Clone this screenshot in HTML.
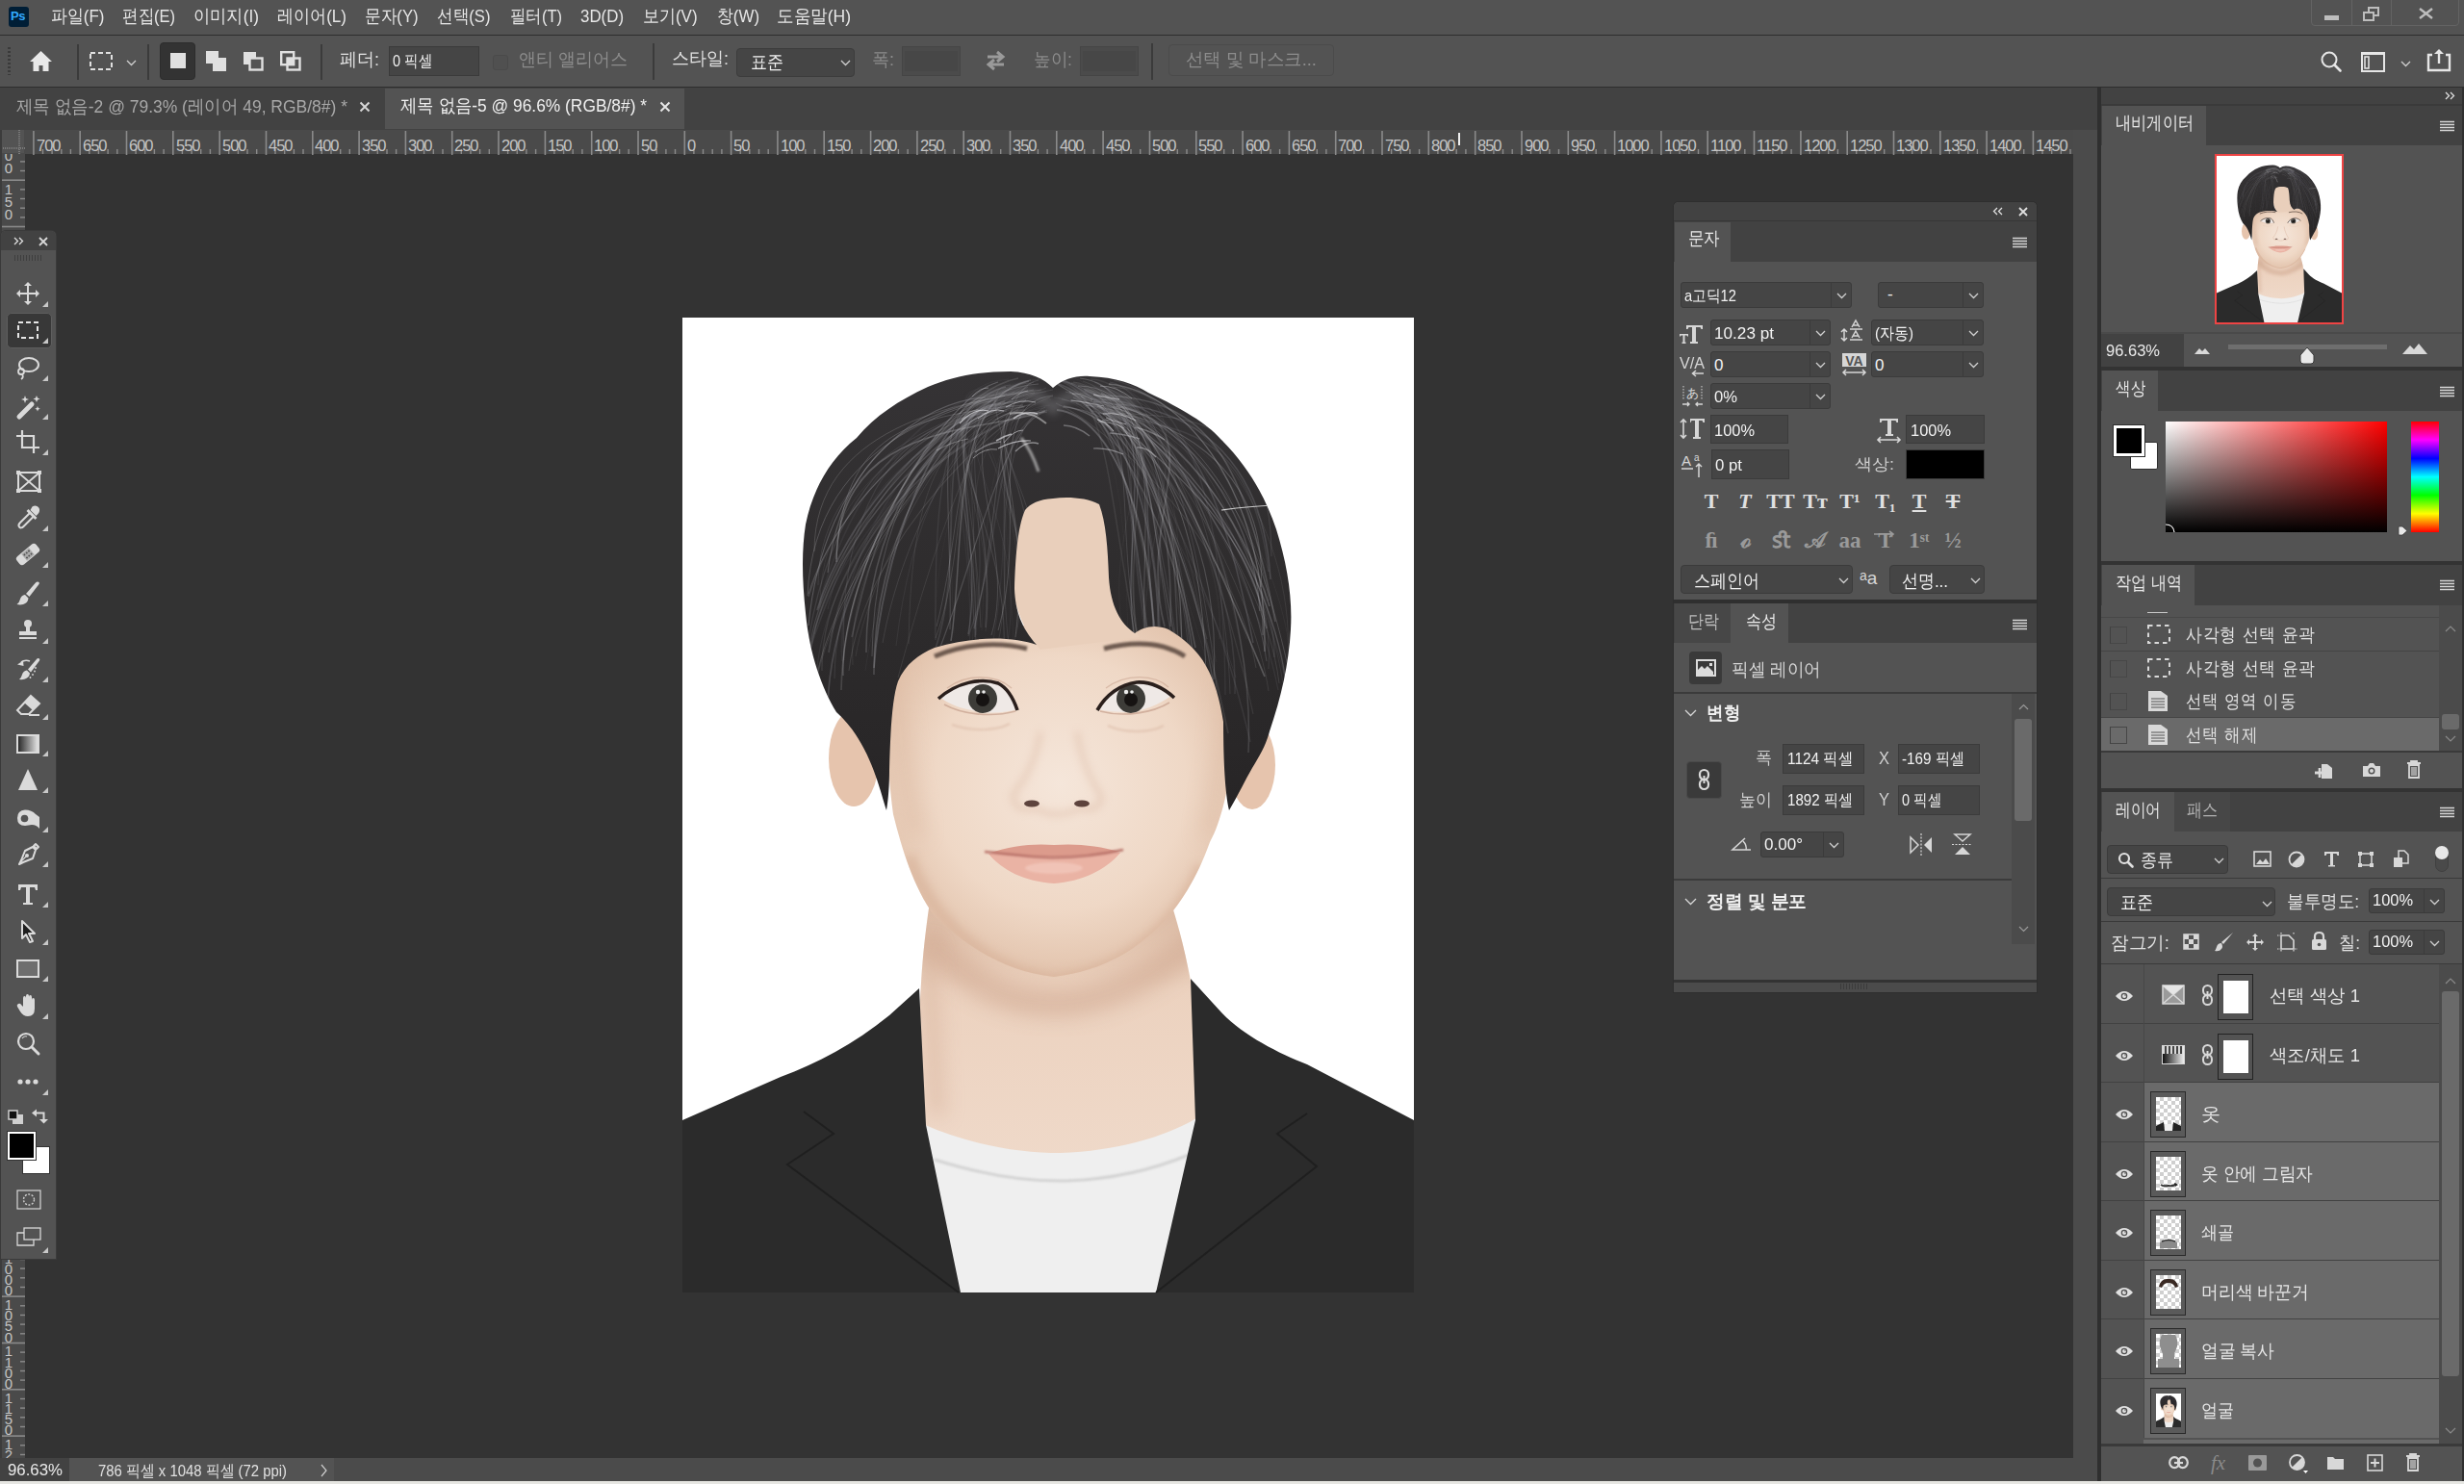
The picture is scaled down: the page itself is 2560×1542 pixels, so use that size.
<!DOCTYPE html><html><head><meta charset="utf-8"><style>
*{margin:0;padding:0;box-sizing:border-box}
html,body{width:2560px;height:1542px;overflow:hidden;background:#333333;font-family:"Liberation Sans",sans-serif;color:#e0e0e0}
.a{position:absolute}
.t{position:absolute;white-space:nowrap;line-height:1;transform-origin:0 50%}
svg{position:absolute;overflow:visible}
</style></head><body><div class="a" style="left:0px;top:0px;width:2560px;height:36px;background:#535353;"></div><div class="a" style="left:0px;top:36px;width:2560px;height:1px;background:#2e2e2e;"></div><div class="a" style="left:9px;top:7px;width:21px;height:21px;background:#001e36;border-radius:3px"></div><div class="t" style="left:11px;top:10px;font-size:13px;color:#31a8ff;font-weight:bold;letter-spacing:-0.5px">Ps</div><div class="t" style="left:53px;top:7px;font-size:19px;color:#e6e6e6;;transform:scaleX(0.8913)">파일(F)</div><div class="t" style="left:127px;top:7px;font-size:19px;color:#e6e6e6;;transform:scaleX(0.8685)">편집(E)</div><div class="t" style="left:201px;top:7px;font-size:19px;color:#e6e6e6;;transform:scaleX(0.9074)">이미지(I)</div><div class="t" style="left:288px;top:7px;font-size:19px;color:#e6e6e6;;transform:scaleX(0.8974)">레이어(L)</div><div class="t" style="left:379px;top:7px;font-size:19px;color:#e6e6e6;;transform:scaleX(0.8780)">문자(Y)</div><div class="t" style="left:454px;top:7px;font-size:19px;color:#e6e6e6;;transform:scaleX(0.8764)">선택(S)</div><div class="t" style="left:530px;top:7px;font-size:19px;color:#e6e6e6;;transform:scaleX(0.8673)">필터(T)</div><div class="t" style="left:603px;top:7px;font-size:19px;color:#e6e6e6;;transform:scaleX(0.8881)">3D(D)</div><div class="t" style="left:668px;top:7px;font-size:19px;color:#e6e6e6;;transform:scaleX(0.8938)">보기(V)</div><div class="t" style="left:745px;top:7px;font-size:19px;color:#e6e6e6;;transform:scaleX(0.8872)">창(W)</div><div class="t" style="left:807px;top:7px;font-size:19px;color:#e6e6e6;;transform:scaleX(0.9234)">도움말(H)</div><div class="a" style="left:2401px;top:-4px;width:154px;height:31px;border:1px solid #636363;border-radius:4px"></div><div class="a" style="left:2443px;top:0px;width:1px;height:27px;background:#636363;"></div><div class="a" style="left:2484px;top:0px;width:1px;height:27px;background:#636363;"></div><div class="a" style="left:2415px;top:16px;width:15px;height:5px;background:#bdbdbd;"></div><svg style="left:2455px;top:7px" width="18" height="15" viewBox="0 0 18 15"><rect x="6" y="1" width="10" height="8" fill="none" stroke="#bdbdbd" stroke-width="2"/><rect x="1" y="6" width="10" height="8" fill="#535353" stroke="#bdbdbd" stroke-width="2"/></svg><svg style="left:2513px;top:8px" width="15" height="12" viewBox="0 0 15 12"><path d="M1 1L14 11M14 1L1 11" stroke="#bdbdbd" stroke-width="2.4"/></svg><div class="a" style="left:0px;top:37px;width:2560px;height:53px;background:#535353;"></div><div class="a" style="left:0px;top:90px;width:2560px;height:1px;background:#2e2e2e;"></div><div class="a" style="left:8px;top:49px;width:3px;height:29px;background:repeating-linear-gradient(#3a3a3a 0 2px,transparent 2px 4px)"></div><svg style="left:30px;top:52px" width="25" height="23" viewBox="0 0 25 23"><path d="M12.5 1L1 12h3.5v10h6v-6h4v6h6V12H24z" fill="#e8e8e8"/></svg><div class="a" style="left:80px;top:46px;width:2px;height:37px;background:#3b3b3b;"></div><svg style="left:93px;top:54px" width="24" height="19" viewBox="0 0 24 19"><rect x="1" y="1" width="22" height="17" fill="none" stroke="#e0e0e0" stroke-width="2" stroke-dasharray="5 3"/></svg><svg style="left:131px;top:62px" width="11" height="7" viewBox="0 0 11 7"><path d="M1 1l4.5 4.5L10 1" fill="none" stroke="#cfcfcf" stroke-width="1.3"/></svg><div class="a" style="left:153px;top:46px;width:2px;height:37px;background:#3b3b3b;"></div><div class="a" style="left:166px;top:44px;width:37px;height:39px;background:#333;border-radius:4px;border:1px solid #2c2c2c"></div><div class="a" style="left:177px;top:55px;width:16px;height:16px;background:#e0e0e0;"></div><svg style="left:213px;top:52px" width="23" height="23" viewBox="0 0 23 23"><rect x="1" y="1" width="13" height="13" fill="#e0e0e0"/><rect x="8" y="8" width="14" height="14" fill="#e0e0e0"/></svg><svg style="left:252px;top:53px" width="22" height="21" viewBox="0 0 22 21"><rect x="1" y="1" width="13" height="13" fill="#e0e0e0"/><rect x="7.5" y="7.5" width="13" height="12" fill="#535353" stroke="#e0e0e0" stroke-width="2.4"/></svg><svg style="left:291px;top:53px" width="22" height="21" viewBox="0 0 22 21"><rect x="1.2" y="1.2" width="13" height="13" fill="none" stroke="#e0e0e0" stroke-width="2.4"/><rect x="7.5" y="7.5" width="13" height="12" fill="none" stroke="#e0e0e0" stroke-width="2.4"/><rect x="7.5" y="7.5" width="7" height="7" fill="#e0e0e0"/></svg><div class="a" style="left:333px;top:46px;width:2px;height:37px;background:#3b3b3b;"></div><div class="t" style="left:353px;top:52px;font-size:19px;color:#e0e0e0;;transform:scaleX(0.9473)">페더:</div><div class="a" style="left:404px;top:48px;width:94px;height:31px;background:#454545;border:1px solid #3a3a3a"></div><div class="t" style="left:408px;top:55px;font-size:17px;color:#f2f2f2;;transform:scaleX(0.8508)">0 픽셀</div><div class="a" style="left:512px;top:57px;width:16px;height:16px;border:1px solid #4a4a4a;border-radius:3px;background:#505050"></div><div class="t" style="left:539px;top:52px;font-size:19px;color:#8c8c8c;;transform:scaleX(0.9473)">앤티 앨리어스</div><div class="a" style="left:678px;top:45px;width:2px;height:38px;background:#3b3b3b;"></div><div class="t" style="left:698px;top:51px;font-size:19px;color:#e0e0e0;;transform:scaleX(0.9473)">스타일:</div><div class="a" style="left:765px;top:50px;width:123px;height:30px;background:#454545;border:1px solid #3c3c3c;border-radius:4px"></div><div class="t" style="left:780px;top:55px;font-size:19px;color:#f0f0f0;;transform:scaleX(0.8947)">표준</div><svg style="left:873px;top:62px" width="11" height="7" viewBox="0 0 11 7"><path d="M1 1l4.5 4.5L10 1" fill="none" stroke="#cfcfcf" stroke-width="1.3"/></svg><div class="t" style="left:906px;top:52px;font-size:19px;color:#8c8c8c;;transform:scaleX(0.9472)">폭:</div><div class="a" style="left:937px;top:48px;width:61px;height:31px;background:#4b4b4b;border:1px solid #454545"><div class="a" style="left:2px;top:4px;width:55px;height:21px;background:#474747"></div></div><svg style="left:1024px;top:53px" width="21" height="20" viewBox="0 0 21 20"><path d="M2 6h15M12 1l6 5-6 5" fill="none" stroke="#9a9a9a" stroke-width="3"/><path d="M19 14H4M9 9l-6 5 6 5" fill="none" stroke="#9a9a9a" stroke-width="3"/></svg><div class="t" style="left:1074px;top:52px;font-size:19px;color:#8c8c8c;;transform:scaleX(0.9242)">높이:</div><div class="a" style="left:1122px;top:48px;width:61px;height:31px;background:#4b4b4b;border:1px solid #454545"><div class="a" style="left:2px;top:4px;width:55px;height:21px;background:#474747"></div></div><div class="a" style="left:1196px;top:45px;width:2px;height:38px;background:#3b3b3b;"></div><div class="a" style="left:1214px;top:46px;width:172px;height:33px;border:1px solid #4b4b4b;border-radius:4px;background:#535353"></div><div class="t" style="left:1232px;top:52px;font-size:19px;color:#8c8c8c;;transform:scaleX(0.9686)">선택 및 마스크...</div><svg style="left:2411px;top:53px" width="22" height="22" viewBox="0 0 22 22"><circle cx="9" cy="9" r="7.5" fill="none" stroke="#e6e6e6" stroke-width="2"/><path d="M14.5 14.5l6 6" stroke="#e6e6e6" stroke-width="2.6" stroke-linecap="round"/></svg><svg style="left:2453px;top:54px" width="25" height="21" viewBox="0 0 25 21"><rect x="1" y="1" width="23" height="19" fill="none" stroke="#e6e6e6" stroke-width="2"/><rect x="1" y="1" width="23" height="2" fill="#e6e6e6"/><rect x="4" y="5" width="4" height="12" fill="none" stroke="#e6e6e6" stroke-width="1.5"/></svg><svg style="left:2494px;top:63px" width="11" height="7" viewBox="0 0 11 7"><path d="M1 1l4.5 4.5L10 1" fill="none" stroke="#cfcfcf" stroke-width="1.3"/></svg><svg style="left:2521px;top:50px" width="26" height="25" viewBox="0 0 26 25"><path d="M6 7H2v16h22V7h-4" fill="none" stroke="#e6e6e6" stroke-width="2.4"/><path d="M13 16V4" stroke="#e6e6e6" stroke-width="2.4"/><path d="M8 6l5-5 5 5z" fill="#e6e6e6"/></svg><div class="a" style="left:0px;top:91px;width:2179px;height:44px;background:#424242;"></div><div class="t" style="left:17px;top:101px;font-size:19px;color:#a8a8a8;;transform:scaleX(0.9196)">제목 없음-2 @ 79.3% (레이어 49, RGB/8#) *</div><svg style="left:373px;top:105px" width="12" height="12" viewBox="0 0 12 12"><path d="M1.5 1.5l9 9M10.5 1.5l-9 9" stroke="#d6d6d6" stroke-width="2"/></svg><div class="a" style="left:400px;top:92px;width:311px;height:42px;background:#535353;"></div><div class="t" style="left:416px;top:100px;font-size:19px;color:#f0f0f0;;transform:scaleX(0.9140)">제목 없음-5 @ 96.6% (RGB/8#) *</div><svg style="left:685px;top:105px" width="12" height="12" viewBox="0 0 12 12"><path d="M1.5 1.5l9 9M10.5 1.5l-9 9" stroke="#e6e6e6" stroke-width="2"/></svg><div class="a" style="left:0px;top:135px;width:2154px;height:25px;background:#4a4a4a;"></div><div class="a" style="left:0px;top:160px;width:26px;height:1355px;background:#4a4a4a;"></div><div class="a" style="left:1px;top:135px;width:24px;height:24px;background:#535353;"></div><div class="a" style="left:1px;top:153px;width:25px;height:2px;background:repeating-linear-gradient(90deg,#7a7a7a 0 1px,transparent 1px 2px)"></div><div class="a" style="left:19px;top:135px;width:2px;height:25px;background:repeating-linear-gradient(#7a7a7a 0 1px,transparent 1px 2px)"></div><svg style="left:0;top:135px" width="2154" height="26"><rect x="34.1" y="1" width="1.6" height="25" fill="#8a8a8a"/><rect x="43.8" y="20" width="1.4" height="5" fill="#8a8a8a"/><rect x="53.4" y="20" width="1.4" height="5" fill="#8a8a8a"/><rect x="63.1" y="20" width="1.4" height="5" fill="#8a8a8a"/><rect x="72.7" y="20" width="1.4" height="5" fill="#8a8a8a"/><rect x="82.4" y="1" width="1.6" height="25" fill="#8a8a8a"/><rect x="92.1" y="20" width="1.4" height="5" fill="#8a8a8a"/><rect x="101.7" y="20" width="1.4" height="5" fill="#8a8a8a"/><rect x="111.4" y="20" width="1.4" height="5" fill="#8a8a8a"/><rect x="121.1" y="20" width="1.4" height="5" fill="#8a8a8a"/><rect x="130.7" y="1" width="1.6" height="25" fill="#8a8a8a"/><rect x="140.4" y="20" width="1.4" height="5" fill="#8a8a8a"/><rect x="150.0" y="20" width="1.4" height="5" fill="#8a8a8a"/><rect x="159.7" y="20" width="1.4" height="5" fill="#8a8a8a"/><rect x="169.4" y="20" width="1.4" height="5" fill="#8a8a8a"/><rect x="179.0" y="1" width="1.6" height="25" fill="#8a8a8a"/><rect x="188.7" y="20" width="1.4" height="5" fill="#8a8a8a"/><rect x="198.4" y="20" width="1.4" height="5" fill="#8a8a8a"/><rect x="208.0" y="20" width="1.4" height="5" fill="#8a8a8a"/><rect x="217.7" y="20" width="1.4" height="5" fill="#8a8a8a"/><rect x="227.4" y="1" width="1.6" height="25" fill="#8a8a8a"/><rect x="237.0" y="20" width="1.4" height="5" fill="#8a8a8a"/><rect x="246.7" y="20" width="1.4" height="5" fill="#8a8a8a"/><rect x="256.3" y="20" width="1.4" height="5" fill="#8a8a8a"/><rect x="266.0" y="20" width="1.4" height="5" fill="#8a8a8a"/><rect x="275.7" y="1" width="1.6" height="25" fill="#8a8a8a"/><rect x="285.3" y="20" width="1.4" height="5" fill="#8a8a8a"/><rect x="295.0" y="20" width="1.4" height="5" fill="#8a8a8a"/><rect x="304.7" y="20" width="1.4" height="5" fill="#8a8a8a"/><rect x="314.3" y="20" width="1.4" height="5" fill="#8a8a8a"/><rect x="324.0" y="1" width="1.6" height="25" fill="#8a8a8a"/><rect x="333.6" y="20" width="1.4" height="5" fill="#8a8a8a"/><rect x="343.3" y="20" width="1.4" height="5" fill="#8a8a8a"/><rect x="353.0" y="20" width="1.4" height="5" fill="#8a8a8a"/><rect x="362.6" y="20" width="1.4" height="5" fill="#8a8a8a"/><rect x="372.3" y="1" width="1.6" height="25" fill="#8a8a8a"/><rect x="382.0" y="20" width="1.4" height="5" fill="#8a8a8a"/><rect x="391.6" y="20" width="1.4" height="5" fill="#8a8a8a"/><rect x="401.3" y="20" width="1.4" height="5" fill="#8a8a8a"/><rect x="410.9" y="20" width="1.4" height="5" fill="#8a8a8a"/><rect x="420.6" y="1" width="1.6" height="25" fill="#8a8a8a"/><rect x="430.3" y="20" width="1.4" height="5" fill="#8a8a8a"/><rect x="439.9" y="20" width="1.4" height="5" fill="#8a8a8a"/><rect x="449.6" y="20" width="1.4" height="5" fill="#8a8a8a"/><rect x="459.3" y="20" width="1.4" height="5" fill="#8a8a8a"/><rect x="468.9" y="1" width="1.6" height="25" fill="#8a8a8a"/><rect x="478.6" y="20" width="1.4" height="5" fill="#8a8a8a"/><rect x="488.3" y="20" width="1.4" height="5" fill="#8a8a8a"/><rect x="497.9" y="20" width="1.4" height="5" fill="#8a8a8a"/><rect x="507.6" y="20" width="1.4" height="5" fill="#8a8a8a"/><rect x="517.2" y="1" width="1.6" height="25" fill="#8a8a8a"/><rect x="526.9" y="20" width="1.4" height="5" fill="#8a8a8a"/><rect x="536.6" y="20" width="1.4" height="5" fill="#8a8a8a"/><rect x="546.2" y="20" width="1.4" height="5" fill="#8a8a8a"/><rect x="555.9" y="20" width="1.4" height="5" fill="#8a8a8a"/><rect x="565.6" y="1" width="1.6" height="25" fill="#8a8a8a"/><rect x="575.2" y="20" width="1.4" height="5" fill="#8a8a8a"/><rect x="584.9" y="20" width="1.4" height="5" fill="#8a8a8a"/><rect x="594.5" y="20" width="1.4" height="5" fill="#8a8a8a"/><rect x="604.2" y="20" width="1.4" height="5" fill="#8a8a8a"/><rect x="613.9" y="1" width="1.6" height="25" fill="#8a8a8a"/><rect x="623.5" y="20" width="1.4" height="5" fill="#8a8a8a"/><rect x="633.2" y="20" width="1.4" height="5" fill="#8a8a8a"/><rect x="642.9" y="20" width="1.4" height="5" fill="#8a8a8a"/><rect x="652.5" y="20" width="1.4" height="5" fill="#8a8a8a"/><rect x="662.2" y="1" width="1.6" height="25" fill="#8a8a8a"/><rect x="671.8" y="20" width="1.4" height="5" fill="#8a8a8a"/><rect x="681.5" y="20" width="1.4" height="5" fill="#8a8a8a"/><rect x="691.2" y="20" width="1.4" height="5" fill="#8a8a8a"/><rect x="700.8" y="20" width="1.4" height="5" fill="#8a8a8a"/><rect x="710.5" y="1" width="1.6" height="25" fill="#8a8a8a"/><rect x="720.2" y="20" width="1.4" height="5" fill="#8a8a8a"/><rect x="729.8" y="20" width="1.4" height="5" fill="#8a8a8a"/><rect x="739.5" y="20" width="1.4" height="5" fill="#8a8a8a"/><rect x="749.2" y="20" width="1.4" height="5" fill="#8a8a8a"/><rect x="758.8" y="1" width="1.6" height="25" fill="#8a8a8a"/><rect x="768.5" y="20" width="1.4" height="5" fill="#8a8a8a"/><rect x="778.1" y="20" width="1.4" height="5" fill="#8a8a8a"/><rect x="787.8" y="20" width="1.4" height="5" fill="#8a8a8a"/><rect x="797.5" y="20" width="1.4" height="5" fill="#8a8a8a"/><rect x="807.1" y="1" width="1.6" height="25" fill="#8a8a8a"/><rect x="816.8" y="20" width="1.4" height="5" fill="#8a8a8a"/><rect x="826.5" y="20" width="1.4" height="5" fill="#8a8a8a"/><rect x="836.1" y="20" width="1.4" height="5" fill="#8a8a8a"/><rect x="845.8" y="20" width="1.4" height="5" fill="#8a8a8a"/><rect x="855.4" y="1" width="1.6" height="25" fill="#8a8a8a"/><rect x="865.1" y="20" width="1.4" height="5" fill="#8a8a8a"/><rect x="874.8" y="20" width="1.4" height="5" fill="#8a8a8a"/><rect x="884.4" y="20" width="1.4" height="5" fill="#8a8a8a"/><rect x="894.1" y="20" width="1.4" height="5" fill="#8a8a8a"/><rect x="903.8" y="1" width="1.6" height="25" fill="#8a8a8a"/><rect x="913.4" y="20" width="1.4" height="5" fill="#8a8a8a"/><rect x="923.1" y="20" width="1.4" height="5" fill="#8a8a8a"/><rect x="932.7" y="20" width="1.4" height="5" fill="#8a8a8a"/><rect x="942.4" y="20" width="1.4" height="5" fill="#8a8a8a"/><rect x="952.1" y="1" width="1.6" height="25" fill="#8a8a8a"/><rect x="961.7" y="20" width="1.4" height="5" fill="#8a8a8a"/><rect x="971.4" y="20" width="1.4" height="5" fill="#8a8a8a"/><rect x="981.1" y="20" width="1.4" height="5" fill="#8a8a8a"/><rect x="990.7" y="20" width="1.4" height="5" fill="#8a8a8a"/><rect x="1000.4" y="1" width="1.6" height="25" fill="#8a8a8a"/><rect x="1010.1" y="20" width="1.4" height="5" fill="#8a8a8a"/><rect x="1019.7" y="20" width="1.4" height="5" fill="#8a8a8a"/><rect x="1029.4" y="20" width="1.4" height="5" fill="#8a8a8a"/><rect x="1039.0" y="20" width="1.4" height="5" fill="#8a8a8a"/><rect x="1048.7" y="1" width="1.6" height="25" fill="#8a8a8a"/><rect x="1058.4" y="20" width="1.4" height="5" fill="#8a8a8a"/><rect x="1068.0" y="20" width="1.4" height="5" fill="#8a8a8a"/><rect x="1077.7" y="20" width="1.4" height="5" fill="#8a8a8a"/><rect x="1087.4" y="20" width="1.4" height="5" fill="#8a8a8a"/><rect x="1097.0" y="1" width="1.6" height="25" fill="#8a8a8a"/><rect x="1106.7" y="20" width="1.4" height="5" fill="#8a8a8a"/><rect x="1116.3" y="20" width="1.4" height="5" fill="#8a8a8a"/><rect x="1126.0" y="20" width="1.4" height="5" fill="#8a8a8a"/><rect x="1135.7" y="20" width="1.4" height="5" fill="#8a8a8a"/><rect x="1145.3" y="1" width="1.6" height="25" fill="#8a8a8a"/><rect x="1155.0" y="20" width="1.4" height="5" fill="#8a8a8a"/><rect x="1164.7" y="20" width="1.4" height="5" fill="#8a8a8a"/><rect x="1174.3" y="20" width="1.4" height="5" fill="#8a8a8a"/><rect x="1184.0" y="20" width="1.4" height="5" fill="#8a8a8a"/><rect x="1193.7" y="1" width="1.6" height="25" fill="#8a8a8a"/><rect x="1203.3" y="20" width="1.4" height="5" fill="#8a8a8a"/><rect x="1213.0" y="20" width="1.4" height="5" fill="#8a8a8a"/><rect x="1222.6" y="20" width="1.4" height="5" fill="#8a8a8a"/><rect x="1232.3" y="20" width="1.4" height="5" fill="#8a8a8a"/><rect x="1242.0" y="1" width="1.6" height="25" fill="#8a8a8a"/><rect x="1251.6" y="20" width="1.4" height="5" fill="#8a8a8a"/><rect x="1261.3" y="20" width="1.4" height="5" fill="#8a8a8a"/><rect x="1271.0" y="20" width="1.4" height="5" fill="#8a8a8a"/><rect x="1280.6" y="20" width="1.4" height="5" fill="#8a8a8a"/><rect x="1290.3" y="1" width="1.6" height="25" fill="#8a8a8a"/><rect x="1299.9" y="20" width="1.4" height="5" fill="#8a8a8a"/><rect x="1309.6" y="20" width="1.4" height="5" fill="#8a8a8a"/><rect x="1319.3" y="20" width="1.4" height="5" fill="#8a8a8a"/><rect x="1328.9" y="20" width="1.4" height="5" fill="#8a8a8a"/><rect x="1338.6" y="1" width="1.6" height="25" fill="#8a8a8a"/><rect x="1348.3" y="20" width="1.4" height="5" fill="#8a8a8a"/><rect x="1357.9" y="20" width="1.4" height="5" fill="#8a8a8a"/><rect x="1367.6" y="20" width="1.4" height="5" fill="#8a8a8a"/><rect x="1377.2" y="20" width="1.4" height="5" fill="#8a8a8a"/><rect x="1386.9" y="1" width="1.6" height="25" fill="#8a8a8a"/><rect x="1396.6" y="20" width="1.4" height="5" fill="#8a8a8a"/><rect x="1406.2" y="20" width="1.4" height="5" fill="#8a8a8a"/><rect x="1415.9" y="20" width="1.4" height="5" fill="#8a8a8a"/><rect x="1425.6" y="20" width="1.4" height="5" fill="#8a8a8a"/><rect x="1435.2" y="1" width="1.6" height="25" fill="#8a8a8a"/><rect x="1444.9" y="20" width="1.4" height="5" fill="#8a8a8a"/><rect x="1454.6" y="20" width="1.4" height="5" fill="#8a8a8a"/><rect x="1464.2" y="20" width="1.4" height="5" fill="#8a8a8a"/><rect x="1473.9" y="20" width="1.4" height="5" fill="#8a8a8a"/><rect x="1483.5" y="1" width="1.6" height="25" fill="#8a8a8a"/><rect x="1493.2" y="20" width="1.4" height="5" fill="#8a8a8a"/><rect x="1502.9" y="20" width="1.4" height="5" fill="#8a8a8a"/><rect x="1512.5" y="20" width="1.4" height="5" fill="#8a8a8a"/><rect x="1522.2" y="20" width="1.4" height="5" fill="#8a8a8a"/><rect x="1531.9" y="1" width="1.6" height="25" fill="#8a8a8a"/><rect x="1541.5" y="20" width="1.4" height="5" fill="#8a8a8a"/><rect x="1551.2" y="20" width="1.4" height="5" fill="#8a8a8a"/><rect x="1560.8" y="20" width="1.4" height="5" fill="#8a8a8a"/><rect x="1570.5" y="20" width="1.4" height="5" fill="#8a8a8a"/><rect x="1580.2" y="1" width="1.6" height="25" fill="#8a8a8a"/><rect x="1589.8" y="20" width="1.4" height="5" fill="#8a8a8a"/><rect x="1599.5" y="20" width="1.4" height="5" fill="#8a8a8a"/><rect x="1609.2" y="20" width="1.4" height="5" fill="#8a8a8a"/><rect x="1618.8" y="20" width="1.4" height="5" fill="#8a8a8a"/><rect x="1628.5" y="1" width="1.6" height="25" fill="#8a8a8a"/><rect x="1638.1" y="20" width="1.4" height="5" fill="#8a8a8a"/><rect x="1647.8" y="20" width="1.4" height="5" fill="#8a8a8a"/><rect x="1657.5" y="20" width="1.4" height="5" fill="#8a8a8a"/><rect x="1667.1" y="20" width="1.4" height="5" fill="#8a8a8a"/><rect x="1676.8" y="1" width="1.6" height="25" fill="#8a8a8a"/><rect x="1686.5" y="20" width="1.4" height="5" fill="#8a8a8a"/><rect x="1696.1" y="20" width="1.4" height="5" fill="#8a8a8a"/><rect x="1705.8" y="20" width="1.4" height="5" fill="#8a8a8a"/><rect x="1715.5" y="20" width="1.4" height="5" fill="#8a8a8a"/><rect x="1725.1" y="1" width="1.6" height="25" fill="#8a8a8a"/><rect x="1734.8" y="20" width="1.4" height="5" fill="#8a8a8a"/><rect x="1744.4" y="20" width="1.4" height="5" fill="#8a8a8a"/><rect x="1754.1" y="20" width="1.4" height="5" fill="#8a8a8a"/><rect x="1763.8" y="20" width="1.4" height="5" fill="#8a8a8a"/><rect x="1773.4" y="1" width="1.6" height="25" fill="#8a8a8a"/><rect x="1783.1" y="20" width="1.4" height="5" fill="#8a8a8a"/><rect x="1792.8" y="20" width="1.4" height="5" fill="#8a8a8a"/><rect x="1802.4" y="20" width="1.4" height="5" fill="#8a8a8a"/><rect x="1812.1" y="20" width="1.4" height="5" fill="#8a8a8a"/><rect x="1821.7" y="1" width="1.6" height="25" fill="#8a8a8a"/><rect x="1831.4" y="20" width="1.4" height="5" fill="#8a8a8a"/><rect x="1841.1" y="20" width="1.4" height="5" fill="#8a8a8a"/><rect x="1850.7" y="20" width="1.4" height="5" fill="#8a8a8a"/><rect x="1860.4" y="20" width="1.4" height="5" fill="#8a8a8a"/><rect x="1870.1" y="1" width="1.6" height="25" fill="#8a8a8a"/><rect x="1879.7" y="20" width="1.4" height="5" fill="#8a8a8a"/><rect x="1889.4" y="20" width="1.4" height="5" fill="#8a8a8a"/><rect x="1899.0" y="20" width="1.4" height="5" fill="#8a8a8a"/><rect x="1908.7" y="20" width="1.4" height="5" fill="#8a8a8a"/><rect x="1918.4" y="1" width="1.6" height="25" fill="#8a8a8a"/><rect x="1928.0" y="20" width="1.4" height="5" fill="#8a8a8a"/><rect x="1937.7" y="20" width="1.4" height="5" fill="#8a8a8a"/><rect x="1947.4" y="20" width="1.4" height="5" fill="#8a8a8a"/><rect x="1957.0" y="20" width="1.4" height="5" fill="#8a8a8a"/><rect x="1966.7" y="1" width="1.6" height="25" fill="#8a8a8a"/><rect x="1976.4" y="20" width="1.4" height="5" fill="#8a8a8a"/><rect x="1986.0" y="20" width="1.4" height="5" fill="#8a8a8a"/><rect x="1995.7" y="20" width="1.4" height="5" fill="#8a8a8a"/><rect x="2005.3" y="20" width="1.4" height="5" fill="#8a8a8a"/><rect x="2015.0" y="1" width="1.6" height="25" fill="#8a8a8a"/><rect x="2024.7" y="20" width="1.4" height="5" fill="#8a8a8a"/><rect x="2034.3" y="20" width="1.4" height="5" fill="#8a8a8a"/><rect x="2044.0" y="20" width="1.4" height="5" fill="#8a8a8a"/><rect x="2053.7" y="20" width="1.4" height="5" fill="#8a8a8a"/><rect x="2063.3" y="1" width="1.6" height="25" fill="#8a8a8a"/><rect x="2073.0" y="20" width="1.4" height="5" fill="#8a8a8a"/><rect x="2082.6" y="20" width="1.4" height="5" fill="#8a8a8a"/><rect x="2092.3" y="20" width="1.4" height="5" fill="#8a8a8a"/><rect x="2102.0" y="20" width="1.4" height="5" fill="#8a8a8a"/><rect x="2111.6" y="1" width="1.6" height="25" fill="#8a8a8a"/><rect x="2121.3" y="20" width="1.4" height="5" fill="#8a8a8a"/><rect x="2131.0" y="20" width="1.4" height="5" fill="#8a8a8a"/><rect x="2140.6" y="20" width="1.4" height="5" fill="#8a8a8a"/><rect x="2150.3" y="20" width="1.4" height="5" fill="#8a8a8a"/></svg><div class="t" style="left:38px;top:143px;font-size:16.5px;color:#c4c4c4;letter-spacing:-1px">700</div><div class="t" style="left:86px;top:143px;font-size:16.5px;color:#c4c4c4;letter-spacing:-1px">650</div><div class="t" style="left:134px;top:143px;font-size:16.5px;color:#c4c4c4;letter-spacing:-1px">600</div><div class="t" style="left:183px;top:143px;font-size:16.5px;color:#c4c4c4;letter-spacing:-1px">550</div><div class="t" style="left:231px;top:143px;font-size:16.5px;color:#c4c4c4;letter-spacing:-1px">500</div><div class="t" style="left:279px;top:143px;font-size:16.5px;color:#c4c4c4;letter-spacing:-1px">450</div><div class="t" style="left:327px;top:143px;font-size:16.5px;color:#c4c4c4;letter-spacing:-1px">400</div><div class="t" style="left:376px;top:143px;font-size:16.5px;color:#c4c4c4;letter-spacing:-1px">350</div><div class="t" style="left:424px;top:143px;font-size:16.5px;color:#c4c4c4;letter-spacing:-1px">300</div><div class="t" style="left:472px;top:143px;font-size:16.5px;color:#c4c4c4;letter-spacing:-1px">250</div><div class="t" style="left:521px;top:143px;font-size:16.5px;color:#c4c4c4;letter-spacing:-1px">200</div><div class="t" style="left:569px;top:143px;font-size:16.5px;color:#c4c4c4;letter-spacing:-1px">150</div><div class="t" style="left:617px;top:143px;font-size:16.5px;color:#c4c4c4;letter-spacing:-1px">100</div><div class="t" style="left:666px;top:143px;font-size:16.5px;color:#c4c4c4;letter-spacing:-1px">50</div><div class="t" style="left:714px;top:143px;font-size:16.5px;color:#c4c4c4;letter-spacing:-1px">0</div><div class="t" style="left:762px;top:143px;font-size:16.5px;color:#c4c4c4;letter-spacing:-1px">50</div><div class="t" style="left:811px;top:143px;font-size:16.5px;color:#c4c4c4;letter-spacing:-1px">100</div><div class="t" style="left:859px;top:143px;font-size:16.5px;color:#c4c4c4;letter-spacing:-1px">150</div><div class="t" style="left:907px;top:143px;font-size:16.5px;color:#c4c4c4;letter-spacing:-1px">200</div><div class="t" style="left:956px;top:143px;font-size:16.5px;color:#c4c4c4;letter-spacing:-1px">250</div><div class="t" style="left:1004px;top:143px;font-size:16.5px;color:#c4c4c4;letter-spacing:-1px">300</div><div class="t" style="left:1052px;top:143px;font-size:16.5px;color:#c4c4c4;letter-spacing:-1px">350</div><div class="t" style="left:1101px;top:143px;font-size:16.5px;color:#c4c4c4;letter-spacing:-1px">400</div><div class="t" style="left:1149px;top:143px;font-size:16.5px;color:#c4c4c4;letter-spacing:-1px">450</div><div class="t" style="left:1197px;top:143px;font-size:16.5px;color:#c4c4c4;letter-spacing:-1px">500</div><div class="t" style="left:1245px;top:143px;font-size:16.5px;color:#c4c4c4;letter-spacing:-1px">550</div><div class="t" style="left:1294px;top:143px;font-size:16.5px;color:#c4c4c4;letter-spacing:-1px">600</div><div class="t" style="left:1342px;top:143px;font-size:16.5px;color:#c4c4c4;letter-spacing:-1px">650</div><div class="t" style="left:1390px;top:143px;font-size:16.5px;color:#c4c4c4;letter-spacing:-1px">700</div><div class="t" style="left:1439px;top:143px;font-size:16.5px;color:#c4c4c4;letter-spacing:-1px">750</div><div class="t" style="left:1487px;top:143px;font-size:16.5px;color:#c4c4c4;letter-spacing:-1px">800</div><div class="t" style="left:1535px;top:143px;font-size:16.5px;color:#c4c4c4;letter-spacing:-1px">850</div><div class="t" style="left:1584px;top:143px;font-size:16.5px;color:#c4c4c4;letter-spacing:-1px">900</div><div class="t" style="left:1632px;top:143px;font-size:16.5px;color:#c4c4c4;letter-spacing:-1px">950</div><div class="t" style="left:1680px;top:143px;font-size:16.5px;color:#c4c4c4;letter-spacing:-1px">1000</div><div class="t" style="left:1729px;top:143px;font-size:16.5px;color:#c4c4c4;letter-spacing:-1px">1050</div><div class="t" style="left:1777px;top:143px;font-size:16.5px;color:#c4c4c4;letter-spacing:-1px">1100</div><div class="t" style="left:1825px;top:143px;font-size:16.5px;color:#c4c4c4;letter-spacing:-1px">1150</div><div class="t" style="left:1874px;top:143px;font-size:16.5px;color:#c4c4c4;letter-spacing:-1px">1200</div><div class="t" style="left:1922px;top:143px;font-size:16.5px;color:#c4c4c4;letter-spacing:-1px">1250</div><div class="t" style="left:1970px;top:143px;font-size:16.5px;color:#c4c4c4;letter-spacing:-1px">1300</div><div class="t" style="left:2019px;top:143px;font-size:16.5px;color:#c4c4c4;letter-spacing:-1px">1350</div><div class="t" style="left:2067px;top:143px;font-size:16.5px;color:#c4c4c4;letter-spacing:-1px">1400</div><div class="t" style="left:2115px;top:143px;font-size:16.5px;color:#c4c4c4;letter-spacing:-1px">1450</div><div class="a" style="left:0;top:160px;width:26px;height:1355px;overflow:hidden"><div class="a" style="left:0;top:-160px;width:26px;height:1515px"><div class="t" style="left:2px;top:93.4px;width:14px;font-size:15px;color:#c4c4c4;line-height:13px;white-space:normal;text-align:center">2<br>5<br>0</div><div class="t" style="left:2px;top:141.7px;width:14px;font-size:15px;color:#c4c4c4;line-height:13px;white-space:normal;text-align:center">2<br>0<br>0</div><div class="t" style="left:2px;top:190.0px;width:14px;font-size:15px;color:#c4c4c4;line-height:13px;white-space:normal;text-align:center">1<br>5<br>0</div><div class="t" style="left:2px;top:238.3px;width:14px;font-size:15px;color:#c4c4c4;line-height:13px;white-space:normal;text-align:center">1<br>0<br>0</div><div class="t" style="left:2px;top:286.7px;width:14px;font-size:15px;color:#c4c4c4;line-height:13px;white-space:normal;text-align:center">5<br>0</div><div class="t" style="left:2px;top:335.0px;width:14px;font-size:15px;color:#c4c4c4;line-height:13px;white-space:normal;text-align:center">0</div><div class="t" style="left:2px;top:383.3px;width:14px;font-size:15px;color:#c4c4c4;line-height:13px;white-space:normal;text-align:center">5<br>0</div><div class="t" style="left:2px;top:431.7px;width:14px;font-size:15px;color:#c4c4c4;line-height:13px;white-space:normal;text-align:center">1<br>0<br>0</div><div class="t" style="left:2px;top:480.0px;width:14px;font-size:15px;color:#c4c4c4;line-height:13px;white-space:normal;text-align:center">1<br>5<br>0</div><div class="t" style="left:2px;top:528.3px;width:14px;font-size:15px;color:#c4c4c4;line-height:13px;white-space:normal;text-align:center">2<br>0<br>0</div><div class="t" style="left:2px;top:576.6px;width:14px;font-size:15px;color:#c4c4c4;line-height:13px;white-space:normal;text-align:center">2<br>5<br>0</div><div class="t" style="left:2px;top:625.0px;width:14px;font-size:15px;color:#c4c4c4;line-height:13px;white-space:normal;text-align:center">3<br>0<br>0</div><div class="t" style="left:2px;top:673.3px;width:14px;font-size:15px;color:#c4c4c4;line-height:13px;white-space:normal;text-align:center">3<br>5<br>0</div><div class="t" style="left:2px;top:721.6px;width:14px;font-size:15px;color:#c4c4c4;line-height:13px;white-space:normal;text-align:center">4<br>0<br>0</div><div class="t" style="left:2px;top:770.0px;width:14px;font-size:15px;color:#c4c4c4;line-height:13px;white-space:normal;text-align:center">4<br>5<br>0</div><div class="t" style="left:2px;top:818.3px;width:14px;font-size:15px;color:#c4c4c4;line-height:13px;white-space:normal;text-align:center">5<br>0<br>0</div><div class="t" style="left:2px;top:866.6px;width:14px;font-size:15px;color:#c4c4c4;line-height:13px;white-space:normal;text-align:center">5<br>5<br>0</div><div class="t" style="left:2px;top:915.0px;width:14px;font-size:15px;color:#c4c4c4;line-height:13px;white-space:normal;text-align:center">6<br>0<br>0</div><div class="t" style="left:2px;top:963.3px;width:14px;font-size:15px;color:#c4c4c4;line-height:13px;white-space:normal;text-align:center">6<br>5<br>0</div><div class="t" style="left:2px;top:1011.6px;width:14px;font-size:15px;color:#c4c4c4;line-height:13px;white-space:normal;text-align:center">7<br>0<br>0</div><div class="t" style="left:2px;top:1059.9px;width:14px;font-size:15px;color:#c4c4c4;line-height:13px;white-space:normal;text-align:center">7<br>5<br>0</div><div class="t" style="left:2px;top:1108.3px;width:14px;font-size:15px;color:#c4c4c4;line-height:13px;white-space:normal;text-align:center">8<br>0<br>0</div><div class="t" style="left:2px;top:1156.6px;width:14px;font-size:15px;color:#c4c4c4;line-height:13px;white-space:normal;text-align:center">8<br>5<br>0</div><div class="t" style="left:2px;top:1204.9px;width:14px;font-size:15px;color:#c4c4c4;line-height:13px;white-space:normal;text-align:center">9<br>0<br>0</div><div class="t" style="left:2px;top:1253.3px;width:14px;font-size:15px;color:#c4c4c4;line-height:13px;white-space:normal;text-align:center">9<br>5<br>0</div><div class="t" style="left:2px;top:1301.6px;width:14px;font-size:15px;color:#c4c4c4;line-height:11.3px;white-space:normal;text-align:center">1<br>0<br>0<br>0</div><div class="t" style="left:2px;top:1349.9px;width:14px;font-size:15px;color:#c4c4c4;line-height:11.3px;white-space:normal;text-align:center">1<br>0<br>5<br>0</div><div class="t" style="left:2px;top:1398.3px;width:14px;font-size:15px;color:#c4c4c4;line-height:11.3px;white-space:normal;text-align:center">1<br>1<br>0<br>0</div><div class="t" style="left:2px;top:1446.6px;width:14px;font-size:15px;color:#c4c4c4;line-height:11.3px;white-space:normal;text-align:center">1<br>1<br>5<br>0</div><div class="t" style="left:2px;top:1494.9px;width:14px;font-size:15px;color:#c4c4c4;line-height:11.3px;white-space:normal;text-align:center">1<br>2<br>0<br>0</div><svg style="left:0;top:0" width="26" height="1515"><rect x="21" y="167.2" width="5" height="1.4" fill="#8a8a8a"/><rect x="21" y="176.8" width="5" height="1.4" fill="#8a8a8a"/><rect x="2" y="186.4" width="24" height="1.6" fill="#8a8a8a"/><rect x="21" y="196.2" width="5" height="1.4" fill="#8a8a8a"/><rect x="21" y="205.8" width="5" height="1.4" fill="#8a8a8a"/><rect x="21" y="215.5" width="5" height="1.4" fill="#8a8a8a"/><rect x="21" y="225.2" width="5" height="1.4" fill="#8a8a8a"/><rect x="2" y="234.7" width="24" height="1.6" fill="#8a8a8a"/><rect x="21" y="244.5" width="5" height="1.4" fill="#8a8a8a"/><rect x="21" y="254.2" width="5" height="1.4" fill="#8a8a8a"/><rect x="21" y="263.8" width="5" height="1.4" fill="#8a8a8a"/><rect x="21" y="273.5" width="5" height="1.4" fill="#8a8a8a"/><rect x="2" y="283.1" width="24" height="1.6" fill="#8a8a8a"/><rect x="21" y="292.8" width="5" height="1.4" fill="#8a8a8a"/><rect x="21" y="302.5" width="5" height="1.4" fill="#8a8a8a"/><rect x="21" y="312.2" width="5" height="1.4" fill="#8a8a8a"/><rect x="21" y="321.8" width="5" height="1.4" fill="#8a8a8a"/><rect x="2" y="331.4" width="24" height="1.6" fill="#8a8a8a"/><rect x="21" y="341.2" width="5" height="1.4" fill="#8a8a8a"/><rect x="21" y="350.8" width="5" height="1.4" fill="#8a8a8a"/><rect x="21" y="360.5" width="5" height="1.4" fill="#8a8a8a"/><rect x="21" y="370.2" width="5" height="1.4" fill="#8a8a8a"/><rect x="2" y="379.7" width="24" height="1.6" fill="#8a8a8a"/><rect x="21" y="389.5" width="5" height="1.4" fill="#8a8a8a"/><rect x="21" y="399.2" width="5" height="1.4" fill="#8a8a8a"/><rect x="21" y="408.8" width="5" height="1.4" fill="#8a8a8a"/><rect x="21" y="418.5" width="5" height="1.4" fill="#8a8a8a"/><rect x="2" y="428.1" width="24" height="1.6" fill="#8a8a8a"/><rect x="21" y="437.8" width="5" height="1.4" fill="#8a8a8a"/><rect x="21" y="447.5" width="5" height="1.4" fill="#8a8a8a"/><rect x="21" y="457.2" width="5" height="1.4" fill="#8a8a8a"/><rect x="21" y="466.8" width="5" height="1.4" fill="#8a8a8a"/><rect x="2" y="476.4" width="24" height="1.6" fill="#8a8a8a"/><rect x="21" y="486.2" width="5" height="1.4" fill="#8a8a8a"/><rect x="21" y="495.8" width="5" height="1.4" fill="#8a8a8a"/><rect x="21" y="505.5" width="5" height="1.4" fill="#8a8a8a"/><rect x="21" y="515.2" width="5" height="1.4" fill="#8a8a8a"/><rect x="2" y="524.7" width="24" height="1.6" fill="#8a8a8a"/><rect x="21" y="534.5" width="5" height="1.4" fill="#8a8a8a"/><rect x="21" y="544.2" width="5" height="1.4" fill="#8a8a8a"/><rect x="21" y="553.8" width="5" height="1.4" fill="#8a8a8a"/><rect x="21" y="563.5" width="5" height="1.4" fill="#8a8a8a"/><rect x="2" y="573.0" width="24" height="1.6" fill="#8a8a8a"/><rect x="21" y="582.8" width="5" height="1.4" fill="#8a8a8a"/><rect x="21" y="592.5" width="5" height="1.4" fill="#8a8a8a"/><rect x="21" y="602.1" width="5" height="1.4" fill="#8a8a8a"/><rect x="21" y="611.8" width="5" height="1.4" fill="#8a8a8a"/><rect x="2" y="621.4" width="24" height="1.6" fill="#8a8a8a"/><rect x="21" y="631.1" width="5" height="1.4" fill="#8a8a8a"/><rect x="21" y="640.8" width="5" height="1.4" fill="#8a8a8a"/><rect x="21" y="650.5" width="5" height="1.4" fill="#8a8a8a"/><rect x="21" y="660.1" width="5" height="1.4" fill="#8a8a8a"/><rect x="2" y="669.7" width="24" height="1.6" fill="#8a8a8a"/><rect x="21" y="679.5" width="5" height="1.4" fill="#8a8a8a"/><rect x="21" y="689.1" width="5" height="1.4" fill="#8a8a8a"/><rect x="21" y="698.8" width="5" height="1.4" fill="#8a8a8a"/><rect x="21" y="708.5" width="5" height="1.4" fill="#8a8a8a"/><rect x="2" y="718.0" width="24" height="1.6" fill="#8a8a8a"/><rect x="21" y="727.8" width="5" height="1.4" fill="#8a8a8a"/><rect x="21" y="737.5" width="5" height="1.4" fill="#8a8a8a"/><rect x="21" y="747.1" width="5" height="1.4" fill="#8a8a8a"/><rect x="21" y="756.8" width="5" height="1.4" fill="#8a8a8a"/><rect x="2" y="766.4" width="24" height="1.6" fill="#8a8a8a"/><rect x="21" y="776.1" width="5" height="1.4" fill="#8a8a8a"/><rect x="21" y="785.8" width="5" height="1.4" fill="#8a8a8a"/><rect x="21" y="795.5" width="5" height="1.4" fill="#8a8a8a"/><rect x="21" y="805.1" width="5" height="1.4" fill="#8a8a8a"/><rect x="2" y="814.7" width="24" height="1.6" fill="#8a8a8a"/><rect x="21" y="824.5" width="5" height="1.4" fill="#8a8a8a"/><rect x="21" y="834.1" width="5" height="1.4" fill="#8a8a8a"/><rect x="21" y="843.8" width="5" height="1.4" fill="#8a8a8a"/><rect x="21" y="853.5" width="5" height="1.4" fill="#8a8a8a"/><rect x="2" y="863.0" width="24" height="1.6" fill="#8a8a8a"/><rect x="21" y="872.8" width="5" height="1.4" fill="#8a8a8a"/><rect x="21" y="882.5" width="5" height="1.4" fill="#8a8a8a"/><rect x="21" y="892.1" width="5" height="1.4" fill="#8a8a8a"/><rect x="21" y="901.8" width="5" height="1.4" fill="#8a8a8a"/><rect x="2" y="911.4" width="24" height="1.6" fill="#8a8a8a"/><rect x="21" y="921.1" width="5" height="1.4" fill="#8a8a8a"/><rect x="21" y="930.8" width="5" height="1.4" fill="#8a8a8a"/><rect x="21" y="940.5" width="5" height="1.4" fill="#8a8a8a"/><rect x="21" y="950.1" width="5" height="1.4" fill="#8a8a8a"/><rect x="2" y="959.7" width="24" height="1.6" fill="#8a8a8a"/><rect x="21" y="969.5" width="5" height="1.4" fill="#8a8a8a"/><rect x="21" y="979.1" width="5" height="1.4" fill="#8a8a8a"/><rect x="21" y="988.8" width="5" height="1.4" fill="#8a8a8a"/><rect x="21" y="998.5" width="5" height="1.4" fill="#8a8a8a"/><rect x="2" y="1008.0" width="24" height="1.6" fill="#8a8a8a"/><rect x="21" y="1017.8" width="5" height="1.4" fill="#8a8a8a"/><rect x="21" y="1027.5" width="5" height="1.4" fill="#8a8a8a"/><rect x="21" y="1037.1" width="5" height="1.4" fill="#8a8a8a"/><rect x="21" y="1046.8" width="5" height="1.4" fill="#8a8a8a"/><rect x="2" y="1056.3" width="24" height="1.6" fill="#8a8a8a"/><rect x="21" y="1066.1" width="5" height="1.4" fill="#8a8a8a"/><rect x="21" y="1075.8" width="5" height="1.4" fill="#8a8a8a"/><rect x="21" y="1085.4" width="5" height="1.4" fill="#8a8a8a"/><rect x="21" y="1095.1" width="5" height="1.4" fill="#8a8a8a"/><rect x="2" y="1104.7" width="24" height="1.6" fill="#8a8a8a"/><rect x="21" y="1114.4" width="5" height="1.4" fill="#8a8a8a"/><rect x="21" y="1124.1" width="5" height="1.4" fill="#8a8a8a"/><rect x="21" y="1133.8" width="5" height="1.4" fill="#8a8a8a"/><rect x="21" y="1143.4" width="5" height="1.4" fill="#8a8a8a"/><rect x="2" y="1153.0" width="24" height="1.6" fill="#8a8a8a"/><rect x="21" y="1162.8" width="5" height="1.4" fill="#8a8a8a"/><rect x="21" y="1172.4" width="5" height="1.4" fill="#8a8a8a"/><rect x="21" y="1182.1" width="5" height="1.4" fill="#8a8a8a"/><rect x="21" y="1191.8" width="5" height="1.4" fill="#8a8a8a"/><rect x="2" y="1201.3" width="24" height="1.6" fill="#8a8a8a"/><rect x="21" y="1211.1" width="5" height="1.4" fill="#8a8a8a"/><rect x="21" y="1220.8" width="5" height="1.4" fill="#8a8a8a"/><rect x="21" y="1230.4" width="5" height="1.4" fill="#8a8a8a"/><rect x="21" y="1240.1" width="5" height="1.4" fill="#8a8a8a"/><rect x="2" y="1249.7" width="24" height="1.6" fill="#8a8a8a"/><rect x="21" y="1259.4" width="5" height="1.4" fill="#8a8a8a"/><rect x="21" y="1269.1" width="5" height="1.4" fill="#8a8a8a"/><rect x="21" y="1278.8" width="5" height="1.4" fill="#8a8a8a"/><rect x="21" y="1288.4" width="5" height="1.4" fill="#8a8a8a"/><rect x="2" y="1298.0" width="24" height="1.6" fill="#8a8a8a"/><rect x="21" y="1307.8" width="5" height="1.4" fill="#8a8a8a"/><rect x="21" y="1317.4" width="5" height="1.4" fill="#8a8a8a"/><rect x="21" y="1327.1" width="5" height="1.4" fill="#8a8a8a"/><rect x="21" y="1336.8" width="5" height="1.4" fill="#8a8a8a"/><rect x="2" y="1346.3" width="24" height="1.6" fill="#8a8a8a"/><rect x="21" y="1356.1" width="5" height="1.4" fill="#8a8a8a"/><rect x="21" y="1365.8" width="5" height="1.4" fill="#8a8a8a"/><rect x="21" y="1375.4" width="5" height="1.4" fill="#8a8a8a"/><rect x="21" y="1385.1" width="5" height="1.4" fill="#8a8a8a"/><rect x="2" y="1394.7" width="24" height="1.6" fill="#8a8a8a"/><rect x="21" y="1404.4" width="5" height="1.4" fill="#8a8a8a"/><rect x="21" y="1414.1" width="5" height="1.4" fill="#8a8a8a"/><rect x="21" y="1423.8" width="5" height="1.4" fill="#8a8a8a"/><rect x="21" y="1433.4" width="5" height="1.4" fill="#8a8a8a"/><rect x="2" y="1443.0" width="24" height="1.6" fill="#8a8a8a"/><rect x="21" y="1452.8" width="5" height="1.4" fill="#8a8a8a"/><rect x="21" y="1462.4" width="5" height="1.4" fill="#8a8a8a"/><rect x="21" y="1472.1" width="5" height="1.4" fill="#8a8a8a"/><rect x="21" y="1481.8" width="5" height="1.4" fill="#8a8a8a"/><rect x="2" y="1491.3" width="24" height="1.6" fill="#8a8a8a"/><rect x="21" y="1501.1" width="5" height="1.4" fill="#8a8a8a"/><rect x="21" y="1510.8" width="5" height="1.4" fill="#8a8a8a"/></svg></div></div><div class="a" style="left:0px;top:135px;width:2px;height:1380px;background:#3c3c3c;"></div><div class="a" style="left:1515px;top:138px;width:2px;height:13px;background:#f0f0f0;"></div><div class="a" style="left:2154px;top:135px;width:25px;height:1380px;background:#4b4b4b;"></div><div class="a" style="left:2179px;top:91px;width:4px;height:1451px;background:#2f2f2f;"></div><div class="a" style="left:0px;top:1515px;width:2179px;height:24px;background:#4b4b4b;"></div><div class="a" style="left:0px;top:1515px;width:72px;height:24px;background:#424242;"></div><div class="t" style="left:8px;top:1519px;font-size:17px;color:#eaeaea;;transform:scaleX(0.9884)">96.63%</div><div class="a" style="left:72px;top:1515px;width:275px;height:24px;background:#535353;"></div><div class="t" style="left:102px;top:1520px;font-size:17px;color:#e0e0e0;;transform:scaleX(0.8752)">786 픽셀 x 1048 픽셀 (72 ppi)</div><svg style="left:333px;top:1521px" width="7" height="14" viewBox="0 0 7 14"><path d="M1 1l5 6-5 6" fill="none" stroke="#cfcfcf" stroke-width="1.2"/></svg><svg style="left:709px;top:330px" width="760" height="1013" viewBox="0 0 760 1013">
<defs>
<radialGradient id="skin" cx="0.5" cy="0.45" r="0.6">
<stop offset="0" stop-color="#f5e6da"/><stop offset="0.6" stop-color="#efd8c6"/><stop offset="1" stop-color="#dfbea6"/></radialGradient>
<linearGradient id="neck" x1="0" y1="0" x2="0" y2="1">
<stop offset="0" stop-color="#d9b7a0"/><stop offset="0.35" stop-color="#ecd2bf"/><stop offset="1" stop-color="#efd9c9"/></linearGradient>
<linearGradient id="hairg" x1="0" y1="0" x2="0" y2="1">
<stop offset="0" stop-color="#353335"/><stop offset="0.5" stop-color="#2e2c2d"/><stop offset="1" stop-color="#272526"/></linearGradient>
<filter id="bl1" filterUnits="userSpaceOnUse" x="-100" y="-100" width="960" height="1213"><feGaussianBlur stdDeviation="1.2"/></filter>
<filter id="bl3" filterUnits="userSpaceOnUse" x="-100" y="-100" width="960" height="1213"><feGaussianBlur stdDeviation="4"/></filter>
<filter id="bl8" filterUnits="userSpaceOnUse" x="-100" y="-100" width="960" height="1213"><feGaussianBlur stdDeviation="10"/></filter>
<clipPath id="hairclip"><path id="hairp" d="M160 410C145 385 132 350 128 307C124 270 124 240 128 215C135 180 152 148 181 125C200 102 225 86 255 72C280 62 305 56 341 56C362 57 375 63 385 73C396 64 408 60 423 61C450 62 470 69 484 78C520 95 545 110 559 126C588 155 605 185 617 220C628 255 634 290 632 324C630 360 622 395 610 430C606 445 600 455 592 468C585 480 578 495 568 512C563 490 562 450 562 420C558 395 553 378 544 362C535 345 520 333 505 324C490 318 478 322 470 328C455 318 445 300 443 270C442 240 440 212 433 194C420 187 400 186 385 188C370 189 362 193 356 200C348 218 346 250 345 282C346 305 352 322 368 340C345 332 305 330 262 343C245 350 232 360 224 378C218 395 216 430 215 470C215 485 214 500 212 512C205 490 194 440 160 410Z"/></clipPath>
<clipPath id="faceclip"><path d="M212 320L572 320L574 420C572 470 562 520 548 545C535 582 516 612 496 632C470 657 440 678 386 685C340 680 300 658 262 622C240 592 228 552 219 516C213 470 210 420 212 320Z"/></clipPath>
</defs>
<g id="photoG">
<rect width="760" height="1013" fill="#ffffff"/>
<!-- neck -->
<path d="M258 600L505 600C522 650 538 720 545 834L545 880L250 880L246 834C245 760 244 690 258 600Z" fill="url(#neck)"/>
<clipPath id="neckclip"><path d="M258 600L505 600C522 650 538 720 545 834L545 880L250 880L246 834C245 760 244 690 258 600Z"/></clipPath><g clip-path="url(#neckclip)"><path d="M250 640C300 700 350 715 400 712C460 705 510 670 545 640" fill="none" stroke="#c99f86" stroke-width="30" opacity="0.45" filter="url(#bl8)"/><path d="M255 650L265 830" stroke="#d4ad96" stroke-width="16" opacity="0.5" filter="url(#bl8)"/></g>
<!-- ears -->
<ellipse cx="178" cy="458" rx="26" ry="50" fill="#e6c4ad"/>
<ellipse cx="592" cy="465" rx="24" ry="46" fill="#e6c4ad"/>
<!-- face -->
<path d="M212 320L572 320L574 420C572 470 562 520 548 545C535 582 516 612 496 632C470 657 440 678 386 685C340 680 300 658 262 622C240 592 228 552 219 516C213 470 210 420 212 320Z" fill="url(#skin)"/>
<!-- forehead -->
<path d="M340 192C380 176 425 178 446 196C452 240 455 300 475 332L372 345C338 310 334 240 340 192Z" fill="#e9cfbb"/>
<!-- jaw shadow -->
<g clip-path="url(#faceclip)"><path d="M235 560C260 630 320 680 386 688C450 682 510 640 540 570" fill="none" stroke="#d5ae95" stroke-width="14" opacity="0.55" filter="url(#bl3)"/><path d="M215 330C225 420 230 480 245 540" fill="none" stroke="#dcb9a2" stroke-width="16" opacity="0.5" filter="url(#bl8)"/><path d="M572 330C565 420 560 480 545 540" fill="none" stroke="#dcb9a2" stroke-width="16" opacity="0.5" filter="url(#bl8)"/></g>
<!-- hair -->
<path d="M160 410C145 385 132 350 128 307C124 270 124 240 128 215C135 180 152 148 181 125C200 102 225 86 255 72C280 62 305 56 341 56C362 57 375 63 385 73C396 64 408 60 423 61C450 62 470 69 484 78C520 95 545 110 559 126C588 155 605 185 617 220C628 255 634 290 632 324C630 360 622 395 610 430C606 445 600 455 592 468C585 480 578 495 568 512C563 490 562 450 562 420C558 395 553 378 544 362C535 345 520 333 505 324C490 318 478 322 470 328C455 318 445 300 443 270C442 240 440 212 433 194C420 187 400 186 385 188C370 189 362 193 356 200C348 218 346 250 345 282C346 305 352 322 368 340C345 332 305 330 262 343C245 350 232 360 224 378C218 395 216 430 215 470C215 485 214 500 212 512C205 490 194 440 160 410Z" fill="url(#hairg)"/>
<!-- sideburns -->

<g clip-path="url(#hairclip)"><path d="M362 68C297 69 195 259 180 352" fill="none" stroke="#bdbdc2" stroke-opacity="0.16" stroke-width="0.7"/><path d="M424 64C504 66 573 318 593 412" fill="none" stroke="#bdbdc2" stroke-opacity="0.11" stroke-width="1.3"/><path d="M365 67C312 82 161 259 139 379" fill="none" stroke="#bdbdc2" stroke-opacity="0.19" stroke-width="0.7"/><path d="M428 81C533 90 566 286 569 391" fill="none" stroke="#9c9ca2" stroke-opacity="0.25" stroke-width="0.7"/><path d="M348 95C300 106 252 272 224 374" fill="none" stroke="#d8d8dc" stroke-opacity="0.18" stroke-width="0.6"/><path d="M390 83C455 96 545 279 575 374" fill="none" stroke="#d8d8dc" stroke-opacity="0.08" stroke-width="0.9"/><path d="M339 64C241 71 307 201 298 345" fill="none" stroke="#bdbdc2" stroke-opacity="0.07" stroke-width="1.2"/><path d="M428 81C496 104 594 284 609 388" fill="none" stroke="#bdbdc2" stroke-opacity="0.16" stroke-width="0.9"/><path d="M328 95C226 119 141 197 143 301" fill="none" stroke="#9c9ca2" stroke-opacity="0.12" stroke-width="0.9"/><path d="M443 69C526 77 608 188 605 347" fill="none" stroke="#d8d8dc" stroke-opacity="0.29" stroke-width="1.4"/><path d="M381 96C314 106 339 199 344 340" fill="none" stroke="#bdbdc2" stroke-opacity="0.07" stroke-width="0.7"/><path d="M416 66C493 90 454 246 474 342" fill="none" stroke="#d8d8dc" stroke-opacity="0.11" stroke-width="1.1"/><path d="M367 75C258 87 204 271 190 367" fill="none" stroke="#9c9ca2" stroke-opacity="0.08" stroke-width="1.0"/><path d="M419 88C484 106 453 207 489 358" fill="none" stroke="#bdbdc2" stroke-opacity="0.13" stroke-width="1.4"/><path d="M336 72C259 91 206 256 199 364" fill="none" stroke="#bdbdc2" stroke-opacity="0.25" stroke-width="1.8"/><path d="M441 93C506 94 500 227 492 340" fill="none" stroke="#9c9ca2" stroke-opacity="0.12" stroke-width="1.4"/><path d="M354 98C298 103 361 223 361 329" fill="none" stroke="#bdbdc2" stroke-opacity="0.21" stroke-width="1.7"/><path d="M419 87C522 106 444 218 472 346" fill="none" stroke="#9c9ca2" stroke-opacity="0.10" stroke-width="1.5"/><path d="M379 98C333 102 300 270 260 362" fill="none" stroke="#d8d8dc" stroke-opacity="0.20" stroke-width="1.2"/><path d="M395 93C474 97 561 208 552 376" fill="none" stroke="#bdbdc2" stroke-opacity="0.22" stroke-width="1.2"/><path d="M355 95C294 101 228 227 208 338" fill="none" stroke="#d8d8dc" stroke-opacity="0.16" stroke-width="0.8"/><path d="M410 79C514 92 570 253 587 385" fill="none" stroke="#bdbdc2" stroke-opacity="0.06" stroke-width="1.1"/><path d="M342 91C294 93 157 213 133 345" fill="none" stroke="#d8d8dc" stroke-opacity="0.18" stroke-width="1.5"/><path d="M389 69C431 92 610 214 603 330" fill="none" stroke="#bdbdc2" stroke-opacity="0.29" stroke-width="1.3"/><path d="M337 79C248 101 300 233 263 344" fill="none" stroke="#9c9ca2" stroke-opacity="0.19" stroke-width="1.7"/><path d="M395 67C440 83 441 166 470 328" fill="none" stroke="#d8d8dc" stroke-opacity="0.10" stroke-width="1.5"/><path d="M359 72C313 94 143 224 145 367" fill="none" stroke="#d8d8dc" stroke-opacity="0.11" stroke-width="1.4"/><path d="M413 78C477 89 448 213 473 333" fill="none" stroke="#bdbdc2" stroke-opacity="0.18" stroke-width="1.0"/><path d="M377 97C318 120 160 104 160 254" fill="none" stroke="#d8d8dc" stroke-opacity="0.26" stroke-width="1.6"/><path d="M442 72C531 74 637 209 629 354" fill="none" stroke="#bdbdc2" stroke-opacity="0.16" stroke-width="0.7"/><path d="M341 92C240 104 167 117 160 251" fill="none" stroke="#bdbdc2" stroke-opacity="0.28" stroke-width="0.9"/><path d="M388 89C441 112 574 232 596 364" fill="none" stroke="#d8d8dc" stroke-opacity="0.11" stroke-width="1.1"/><path d="M373 75C281 89 137 115 137 243" fill="none" stroke="#d8d8dc" stroke-opacity="0.28" stroke-width="0.7"/><path d="M415 81C503 105 508 183 515 339" fill="none" stroke="#9c9ca2" stroke-opacity="0.23" stroke-width="1.4"/><path d="M316 99C214 110 161 213 168 356" fill="none" stroke="#9c9ca2" stroke-opacity="0.15" stroke-width="1.2"/><path d="M427 88C467 97 599 125 606 294" fill="none" stroke="#9c9ca2" stroke-opacity="0.14" stroke-width="0.6"/><path d="M370 69C284 75 160 190 131 287" fill="none" stroke="#d8d8dc" stroke-opacity="0.26" stroke-width="0.8"/><path d="M388 63C465 82 585 210 607 357" fill="none" stroke="#9c9ca2" stroke-opacity="0.27" stroke-width="1.1"/><path d="M335 81C237 99 167 140 151 265" fill="none" stroke="#d8d8dc" stroke-opacity="0.23" stroke-width="1.2"/><path d="M438 84C534 101 424 205 462 347" fill="none" stroke="#d8d8dc" stroke-opacity="0.08" stroke-width="0.7"/><path d="M360 66C276 83 294 245 279 336" fill="none" stroke="#d8d8dc" stroke-opacity="0.25" stroke-width="1.5"/><path d="M448 65C544 87 563 241 564 392" fill="none" stroke="#9c9ca2" stroke-opacity="0.12" stroke-width="1.4"/><path d="M350 77C267 93 299 237 305 339" fill="none" stroke="#9c9ca2" stroke-opacity="0.12" stroke-width="1.5"/><path d="M428 67C475 73 514 310 528 456" fill="none" stroke="#bdbdc2" stroke-opacity="0.13" stroke-width="1.2"/><path d="M315 83C255 85 147 151 131 320" fill="none" stroke="#bdbdc2" stroke-opacity="0.30" stroke-width="1.1"/><path d="M390 65C472 81 493 234 497 333" fill="none" stroke="#9c9ca2" stroke-opacity="0.15" stroke-width="1.2"/><path d="M357 68C267 78 314 230 305 330" fill="none" stroke="#9c9ca2" stroke-opacity="0.14" stroke-width="1.0"/><path d="M444 67C504 76 550 277 560 447" fill="none" stroke="#9c9ca2" stroke-opacity="0.20" stroke-width="1.0"/><path d="M332 94C248 98 168 228 130 353" fill="none" stroke="#9c9ca2" stroke-opacity="0.14" stroke-width="1.5"/><path d="M447 93C525 111 595 304 588 452" fill="none" stroke="#d8d8dc" stroke-opacity="0.17" stroke-width="1.5"/><path d="M324 80C255 87 281 175 278 324" fill="none" stroke="#bdbdc2" stroke-opacity="0.22" stroke-width="1.1"/><path d="M406 83C461 106 469 217 483 325" fill="none" stroke="#9c9ca2" stroke-opacity="0.28" stroke-width="1.8"/><path d="M355 83C293 92 165 228 134 334" fill="none" stroke="#9c9ca2" stroke-opacity="0.06" stroke-width="1.6"/><path d="M414 82C473 106 511 190 507 321" fill="none" stroke="#bdbdc2" stroke-opacity="0.21" stroke-width="1.6"/><path d="M379 96C317 116 336 231 297 331" fill="none" stroke="#9c9ca2" stroke-opacity="0.16" stroke-width="1.5"/><path d="M453 81C530 92 617 273 630 426" fill="none" stroke="#d8d8dc" stroke-opacity="0.11" stroke-width="0.8"/><path d="M377 93C331 113 329 242 339 342" fill="none" stroke="#d8d8dc" stroke-opacity="0.20" stroke-width="0.6"/><path d="M406 67C454 69 604 243 620 380" fill="none" stroke="#d8d8dc" stroke-opacity="0.15" stroke-width="0.9"/><path d="M385 82C286 88 238 207 222 341" fill="none" stroke="#d8d8dc" stroke-opacity="0.07" stroke-width="1.1"/><path d="M407 63C465 80 518 276 554 385" fill="none" stroke="#9c9ca2" stroke-opacity="0.07" stroke-width="1.0"/><path d="M360 77C315 89 139 232 139 384" fill="none" stroke="#9c9ca2" stroke-opacity="0.11" stroke-width="1.2"/><path d="M438 73C494 84 506 188 529 354" fill="none" stroke="#bdbdc2" stroke-opacity="0.10" stroke-width="1.1"/><path d="M383 85C312 102 316 226 311 325" fill="none" stroke="#bdbdc2" stroke-opacity="0.08" stroke-width="0.8"/><path d="M398 98C464 107 458 242 464 346" fill="none" stroke="#9c9ca2" stroke-opacity="0.06" stroke-width="0.9"/><path d="M356 96C262 103 351 232 321 330" fill="none" stroke="#d8d8dc" stroke-opacity="0.23" stroke-width="0.8"/><path d="M449 69C518 90 557 241 586 334" fill="none" stroke="#bdbdc2" stroke-opacity="0.07" stroke-width="0.7"/><path d="M367 90C260 106 238 191 235 339" fill="none" stroke="#bdbdc2" stroke-opacity="0.14" stroke-width="0.9"/><path d="M436 85C533 87 567 211 593 338" fill="none" stroke="#9c9ca2" stroke-opacity="0.25" stroke-width="1.5"/><path d="M328 67C267 84 164 263 167 372" fill="none" stroke="#d8d8dc" stroke-opacity="0.27" stroke-width="1.2"/><path d="M391 69C433 83 488 152 495 321" fill="none" stroke="#9c9ca2" stroke-opacity="0.27" stroke-width="1.8"/><path d="M341 70C289 73 381 183 368 344" fill="none" stroke="#d8d8dc" stroke-opacity="0.12" stroke-width="1.2"/><path d="M438 92C496 98 597 189 609 294" fill="none" stroke="#d8d8dc" stroke-opacity="0.12" stroke-width="0.9"/><path d="M372 64C286 67 150 237 137 329" fill="none" stroke="#bdbdc2" stroke-opacity="0.06" stroke-width="1.7"/><path d="M444 97C497 121 590 99 609 264" fill="none" stroke="#9c9ca2" stroke-opacity="0.15" stroke-width="1.6"/><path d="M343 91C253 100 158 240 166 357" fill="none" stroke="#bdbdc2" stroke-opacity="0.07" stroke-width="1.8"/><path d="M427 87C514 91 595 199 600 305" fill="none" stroke="#bdbdc2" stroke-opacity="0.25" stroke-width="1.3"/><path d="M356 92C271 102 200 183 197 352" fill="none" stroke="#bdbdc2" stroke-opacity="0.22" stroke-width="1.1"/><path d="M407 84C517 93 518 206 518 354" fill="none" stroke="#bdbdc2" stroke-opacity="0.11" stroke-width="0.6"/><path d="M355 93C304 94 364 190 346 332" fill="none" stroke="#d8d8dc" stroke-opacity="0.28" stroke-width="0.7"/><path d="M450 90C502 92 602 122 611 272" fill="none" stroke="#9c9ca2" stroke-opacity="0.25" stroke-width="1.6"/><path d="M376 98C271 108 299 182 264 321" fill="none" stroke="#bdbdc2" stroke-opacity="0.26" stroke-width="0.8"/><path d="M428 85C471 109 617 234 615 353" fill="none" stroke="#bdbdc2" stroke-opacity="0.10" stroke-width="1.8"/><path d="M382 83C334 98 190 227 173 367" fill="none" stroke="#d8d8dc" stroke-opacity="0.13" stroke-width="1.1"/><path d="M402 77C443 101 517 227 531 353" fill="none" stroke="#bdbdc2" stroke-opacity="0.21" stroke-width="1.6"/><path d="M328 77C232 90 164 209 141 302" fill="none" stroke="#9c9ca2" stroke-opacity="0.09" stroke-width="1.7"/><path d="M439 81C546 85 583 146 616 316" fill="none" stroke="#bdbdc2" stroke-opacity="0.24" stroke-width="1.6"/><path d="M376 96C288 114 159 219 158 375" fill="none" stroke="#9c9ca2" stroke-opacity="0.21" stroke-width="0.9"/><path d="M448 72C552 78 477 209 480 339" fill="none" stroke="#bdbdc2" stroke-opacity="0.14" stroke-width="0.6"/><path d="M357 86C261 93 169 210 140 304" fill="none" stroke="#9c9ca2" stroke-opacity="0.27" stroke-width="1.8"/><path d="M424 84C508 94 445 249 475 360" fill="none" stroke="#9c9ca2" stroke-opacity="0.30" stroke-width="1.3"/><path d="M362 65C301 78 156 236 151 403" fill="none" stroke="#9c9ca2" stroke-opacity="0.27" stroke-width="1.7"/><path d="M436 90C506 99 617 236 609 365" fill="none" stroke="#bdbdc2" stroke-opacity="0.21" stroke-width="0.7"/><path d="M385 75C304 90 141 138 141 278" fill="none" stroke="#bdbdc2" stroke-opacity="0.17" stroke-width="0.8"/><path d="M435 79C493 99 566 279 605 373" fill="none" stroke="#d8d8dc" stroke-opacity="0.26" stroke-width="1.7"/><path d="M340 79C237 80 332 204 315 326" fill="none" stroke="#bdbdc2" stroke-opacity="0.12" stroke-width="0.7"/><path d="M386 83C468 96 458 171 480 326" fill="none" stroke="#9c9ca2" stroke-opacity="0.10" stroke-width="1.0"/><path d="M341 100C275 111 299 237 263 333" fill="none" stroke="#bdbdc2" stroke-opacity="0.22" stroke-width="0.8"/><path d="M403 86C509 93 636 284 629 425" fill="none" stroke="#d8d8dc" stroke-opacity="0.22" stroke-width="1.4"/><path d="M317 73C241 77 384 165 348 322" fill="none" stroke="#9c9ca2" stroke-opacity="0.11" stroke-width="0.8"/><path d="M398 77C503 101 481 221 513 354" fill="none" stroke="#bdbdc2" stroke-opacity="0.17" stroke-width="1.2"/><path d="M325 79C270 94 276 165 282 328" fill="none" stroke="#bdbdc2" stroke-opacity="0.09" stroke-width="0.6"/><path d="M429 68C478 84 566 239 558 334" fill="none" stroke="#9c9ca2" stroke-opacity="0.07" stroke-width="1.6"/><path d="M371 98C278 116 310 232 301 342" fill="none" stroke="#d8d8dc" stroke-opacity="0.11" stroke-width="0.6"/><path d="M391 91C487 107 522 230 527 347" fill="none" stroke="#9c9ca2" stroke-opacity="0.12" stroke-width="1.0"/><path d="M382 91C308 98 350 182 323 335" fill="none" stroke="#bdbdc2" stroke-opacity="0.07" stroke-width="1.2"/><path d="M409 89C456 109 492 264 490 354" fill="none" stroke="#bdbdc2" stroke-opacity="0.11" stroke-width="1.5"/><path d="M385 81C310 89 360 214 328 325" fill="none" stroke="#bdbdc2" stroke-opacity="0.29" stroke-width="0.9"/><path d="M451 71C525 96 612 295 630 393" fill="none" stroke="#9c9ca2" stroke-opacity="0.14" stroke-width="0.7"/><path d="M323 90C261 101 315 226 297 329" fill="none" stroke="#9c9ca2" stroke-opacity="0.30" stroke-width="1.4"/><path d="M394 85C475 98 511 208 545 334" fill="none" stroke="#9c9ca2" stroke-opacity="0.19" stroke-width="1.0"/><path d="M354 91C252 97 190 234 191 348" fill="none" stroke="#bdbdc2" stroke-opacity="0.23" stroke-width="1.6"/><path d="M436 99C492 123 541 209 544 375" fill="none" stroke="#d8d8dc" stroke-opacity="0.30" stroke-width="0.8"/><path d="M378 77C307 82 350 240 328 338" fill="none" stroke="#bdbdc2" stroke-opacity="0.11" stroke-width="1.1"/><path d="M386 94C447 95 488 210 491 359" fill="none" stroke="#9c9ca2" stroke-opacity="0.06" stroke-width="0.9"/><path d="M336 84C250 106 361 200 338 337" fill="none" stroke="#bdbdc2" stroke-opacity="0.11" stroke-width="0.8"/><path d="M417 74C512 92 452 226 474 336" fill="none" stroke="#d8d8dc" stroke-opacity="0.16" stroke-width="1.1"/><path d="M325 82C262 82 376 180 344 342" fill="none" stroke="#bdbdc2" stroke-opacity="0.09" stroke-width="0.9"/><path d="M396 92C476 105 507 212 533 343" fill="none" stroke="#d8d8dc" stroke-opacity="0.21" stroke-width="1.6"/><path d="M361 90C285 114 394 185 368 325" fill="none" stroke="#9c9ca2" stroke-opacity="0.21" stroke-width="0.9"/><path d="M413 63C478 69 518 198 519 347" fill="none" stroke="#bdbdc2" stroke-opacity="0.29" stroke-width="1.2"/><path d="M315 99C271 118 198 230 199 371" fill="none" stroke="#bdbdc2" stroke-opacity="0.23" stroke-width="1.6"/><path d="M410 86C470 100 578 234 574 391" fill="none" stroke="#9c9ca2" stroke-opacity="0.15" stroke-width="1.6"/><path d="M336 88C239 108 312 190 304 332" fill="none" stroke="#d8d8dc" stroke-opacity="0.14" stroke-width="1.2"/><path d="M430 87C474 108 555 288 590 441" fill="none" stroke="#d8d8dc" stroke-opacity="0.09" stroke-width="1.6"/><path d="M344 87C262 101 163 185 131 290" fill="none" stroke="#bdbdc2" stroke-opacity="0.17" stroke-width="1.5"/><path d="M448 92C543 109 594 209 629 362" fill="none" stroke="#d8d8dc" stroke-opacity="0.26" stroke-width="0.8"/><path d="M370 65C322 75 334 195 303 323" fill="none" stroke="#bdbdc2" stroke-opacity="0.19" stroke-width="1.2"/><path d="M434 71C485 79 594 257 619 387" fill="none" stroke="#9c9ca2" stroke-opacity="0.13" stroke-width="1.2"/><path d="M356 99C314 114 176 184 152 348" fill="none" stroke="#d8d8dc" stroke-opacity="0.14" stroke-width="1.8"/><path d="M419 91C468 93 584 206 607 323" fill="none" stroke="#bdbdc2" stroke-opacity="0.25" stroke-width="1.3"/><path d="M365 75C300 87 137 120 130 289" fill="none" stroke="#bdbdc2" stroke-opacity="0.27" stroke-width="1.0"/><path d="M431 92C512 108 581 207 610 300" fill="none" stroke="#d8d8dc" stroke-opacity="0.23" stroke-width="1.7"/><path d="M345 77C272 96 123 250 130 380" fill="none" stroke="#bdbdc2" stroke-opacity="0.19" stroke-width="1.1"/><path d="M429 88C516 100 527 260 555 358" fill="none" stroke="#bdbdc2" stroke-opacity="0.10" stroke-width="0.6"/><path d="M321 87C242 93 339 216 334 340" fill="none" stroke="#d8d8dc" stroke-opacity="0.14" stroke-width="1.1"/><path d="M425 97C520 107 508 315 533 437" fill="none" stroke="#d8d8dc" stroke-opacity="0.08" stroke-width="1.4"/><path d="M344 98C296 114 263 228 262 330" fill="none" stroke="#d8d8dc" stroke-opacity="0.06" stroke-width="0.6"/><path d="M432 99C505 106 472 197 491 323" fill="none" stroke="#9c9ca2" stroke-opacity="0.24" stroke-width="1.7"/><path d="M331 89C247 107 328 158 315 322" fill="none" stroke="#d8d8dc" stroke-opacity="0.12" stroke-width="1.8"/><path d="M387 64C454 72 536 244 556 410" fill="none" stroke="#9c9ca2" stroke-opacity="0.26" stroke-width="1.3"/><path d="M359 84C263 93 326 183 304 324" fill="none" stroke="#9c9ca2" stroke-opacity="0.16" stroke-width="1.1"/><path d="M451 92C559 109 470 204 501 321" fill="none" stroke="#bdbdc2" stroke-opacity="0.21" stroke-width="1.8"/><path d="M343 74C255 89 382 175 347 329" fill="none" stroke="#9c9ca2" stroke-opacity="0.13" stroke-width="0.6"/><path d="M404 68C464 71 532 262 567 432" fill="none" stroke="#d8d8dc" stroke-opacity="0.10" stroke-width="1.8"/><path d="M337 97C241 102 159 170 131 334" fill="none" stroke="#d8d8dc" stroke-opacity="0.12" stroke-width="1.3"/><path d="M413 89C480 102 525 213 542 331" fill="none" stroke="#d8d8dc" stroke-opacity="0.08" stroke-width="1.1"/><path d="M322 96C269 100 262 189 263 335" fill="none" stroke="#9c9ca2" stroke-opacity="0.15" stroke-width="1.3"/><path d="M440 95C540 104 616 242 630 339" fill="none" stroke="#9c9ca2" stroke-opacity="0.14" stroke-width="0.6"/><path d="M349 63C275 77 168 235 165 387" fill="none" stroke="#d8d8dc" stroke-opacity="0.16" stroke-width="1.7"/><path d="M442 99C495 101 609 146 601 280" fill="none" stroke="#bdbdc2" stroke-opacity="0.27" stroke-width="1.1"/><path d="M325 86C262 92 304 159 310 322" fill="none" stroke="#bdbdc2" stroke-opacity="0.18" stroke-width="0.8"/><path d="M411 71C517 72 466 265 484 358" fill="none" stroke="#d8d8dc" stroke-opacity="0.28" stroke-width="0.9"/><path d="M335 87C242 110 200 218 176 332" fill="none" stroke="#bdbdc2" stroke-opacity="0.20" stroke-width="1.5"/><path d="M418 76C489 96 477 173 512 334" fill="none" stroke="#bdbdc2" stroke-opacity="0.17" stroke-width="1.7"/><path d="M374 94C282 113 189 139 151 303" fill="none" stroke="#bdbdc2" stroke-opacity="0.15" stroke-width="0.6"/><path d="M417 75C467 80 534 265 527 412" fill="none" stroke="#bdbdc2" stroke-opacity="0.19" stroke-width="0.8"/><path d="M366 78C303 82 153 267 138 383" fill="none" stroke="#d8d8dc" stroke-opacity="0.28" stroke-width="0.7"/><path d="M389 96C449 102 489 219 490 338" fill="none" stroke="#bdbdc2" stroke-opacity="0.30" stroke-width="1.8"/><path d="M378 73C318 97 168 207 177 361" fill="none" stroke="#bdbdc2" stroke-opacity="0.14" stroke-width="0.8"/><path d="M440 98C509 105 612 91 612 248" fill="none" stroke="#bdbdc2" stroke-opacity="0.19" stroke-width="0.9"/><path d="M359 76q-8 1 -17 9" fill="none" stroke="#e8e8ec" stroke-opacity="0.41" stroke-width="1.0"/><path d="M444 120q16 1 31 6" fill="none" stroke="#e8e8ec" stroke-opacity="0.33" stroke-width="1.4"/><path d="M342 121q-8 2 -16 7" fill="none" stroke="#e8e8ec" stroke-opacity="0.64" stroke-width="1.5"/><path d="M434 71q17 -0 33 13" fill="none" stroke="#e8e8ec" stroke-opacity="0.41" stroke-width="0.9"/><path d="M308 96q-9 -1 -18 10" fill="none" stroke="#e8e8ec" stroke-opacity="0.30" stroke-width="1.2"/><path d="M431 106q9 2 17 12" fill="none" stroke="#e8e8ec" stroke-opacity="0.65" stroke-width="1.1"/><path d="M318 97q-15 -4 -30 13" fill="none" stroke="#e8e8ec" stroke-opacity="0.68" stroke-width="1.2"/><path d="M436 107q13 -4 26 14" fill="none" stroke="#e8e8ec" stroke-opacity="0.39" stroke-width="0.9"/><path d="M367 88q-16 -4 -31 5" fill="none" stroke="#e8e8ec" stroke-opacity="0.58" stroke-width="1.0"/><path d="M396 112q13 0 27 11" fill="none" stroke="#e8e8ec" stroke-opacity="0.34" stroke-width="1.5"/><path d="M318 73q-9 -0 -17 9" fill="none" stroke="#e8e8ec" stroke-opacity="0.41" stroke-width="0.9"/><path d="M427 80q13 3 27 5" fill="none" stroke="#e8e8ec" stroke-opacity="0.53" stroke-width="1.4"/><path d="M362 128q-17 -1 -34 8" fill="none" stroke="#e8e8ec" stroke-opacity="0.64" stroke-width="1.2"/><path d="M427 136q15 -1 31 6" fill="none" stroke="#e8e8ec" stroke-opacity="0.43" stroke-width="1.1"/><path d="M297 126q-17 3 -33 12" fill="none" stroke="#e8e8ec" stroke-opacity="0.32" stroke-width="1.2"/><path d="M472 135q10 -1 20 10" fill="none" stroke="#e8e8ec" stroke-opacity="0.45" stroke-width="1.2"/><path d="M369 100q-13 -4 -25 5" fill="none" stroke="#e8e8ec" stroke-opacity="0.69" stroke-width="1.4"/><path d="M470 114q16 3 31 13" fill="none" stroke="#e8e8ec" stroke-opacity="0.31" stroke-width="1.3"/><path d="M354 117q-10 0 -20 13" fill="none" stroke="#e8e8ec" stroke-opacity="0.55" stroke-width="1.0"/><path d="M437 100q17 -2 34 7" fill="none" stroke="#e8e8ec" stroke-opacity="0.56" stroke-width="0.9"/><path d="M327 137q-13 -2 -25 9" fill="none" stroke="#e8e8ec" stroke-opacity="0.51" stroke-width="0.9"/><path d="M405 79q10 -1 21 7" fill="none" stroke="#e8e8ec" stroke-opacity="0.40" stroke-width="0.9"/><path d="M331 129q-14 1 -27 11" fill="none" stroke="#e8e8ec" stroke-opacity="0.38" stroke-width="1.4"/><path d="M432 108q14 -0 27 7" fill="none" stroke="#e8e8ec" stroke-opacity="0.40" stroke-width="1.0"/><path d="M334 97q-13 -4 -27 8" fill="none" stroke="#e8e8ec" stroke-opacity="0.64" stroke-width="1.0"/><path d="M440 104q10 4 21 7" fill="none" stroke="#e8e8ec" stroke-opacity="0.61" stroke-width="0.9"/><path d="M370 131q-12 -4 -24 8" fill="none" stroke="#e8e8ec" stroke-opacity="0.48" stroke-width="1.4"/><path d="M404 86q17 2 34 6" fill="none" stroke="#e8e8ec" stroke-opacity="0.43" stroke-width="1.1"/><path d="M560 200Q590 196 614 195" fill="none" stroke="#f0f0f0" stroke-opacity="0.8" stroke-width="1.2"/>
<path d="M300 90C340 70 370 75 385 95C400 75 440 72 470 95" fill="none" stroke="#9a9a9e" stroke-width="10" opacity="0.35" filter="url(#bl3)"/>
<path d="M352 125C360 135 365 145 370 160" fill="none" stroke="#ffffff" stroke-width="3" opacity="0.5" filter="url(#bl1)"/><path d="M340 100Q360 95 378 110" fill="none" stroke="#e0e0e0" stroke-width="2" opacity="0.5"/>
</g>
<!-- eyebrows -->
<path d="M262 352C290 340 325 336 358 344" fill="none" stroke="#4f3e36" stroke-width="5" opacity="0.8" filter="url(#bl1)"/>
<path d="M438 344C470 336 500 338 522 352" fill="none" stroke="#4f3e36" stroke-width="5" opacity="0.8" filter="url(#bl1)"/>
<!-- eyes -->
<path d="M268 395C285 380 305 376 322 379C335 383 344 395 347 407C335 411 318 412 300 408C285 405 275 400 268 395Z" fill="#efe9e6"/>
<circle cx="312" cy="396" r="15" fill="#3d3c38"/><circle cx="312" cy="397" r="7" fill="#161312"/>
<circle cx="307" cy="389" r="2.2" fill="#fff" opacity="0.9"/><circle cx="313" cy="389" r="1.8" fill="#fff" opacity="0.9"/>
<path d="M266 396C285 379 310 374 328 380C338 385 344 396 348 408" fill="none" stroke="#2a1f1c" stroke-width="3.6"/>
<path d="M272 402C290 412 320 416 346 409" fill="none" stroke="#c49e8b" stroke-width="1.6" opacity="0.7"/>
<path d="M275 385C295 370 325 370 342 385" fill="none" stroke="#c39c88" stroke-width="1.4" opacity="0.5"/>
<path d="M432 407C436 395 447 384 462 380C478 376 498 382 508 393C495 402 480 409 462 410C450 410 440 409 432 407Z" fill="#efe9e6"/>
<circle cx="466" cy="396" r="15" fill="#3d3c38"/><circle cx="466" cy="397" r="7" fill="#161312"/>
<circle cx="461" cy="389" r="2.2" fill="#fff" opacity="0.9"/><circle cx="467" cy="389" r="1.8" fill="#fff" opacity="0.9"/>
<path d="M431 408C440 392 455 381 472 379C488 378 500 385 511 395" fill="none" stroke="#2a1f1c" stroke-width="3.6"/>
<path d="M434 409C460 416 490 410 506 400" fill="none" stroke="#c49e8b" stroke-width="1.6" opacity="0.7"/>
<path d="M440 385C460 370 490 370 505 384" fill="none" stroke="#c39c88" stroke-width="1.4" opacity="0.5"/>
<path d="M280 423C300 430 325 430 340 422" fill="none" stroke="#d9b8a4" stroke-width="2" opacity="0.6" filter="url(#bl1)"/>
<path d="M442 424C460 432 485 432 500 424" fill="none" stroke="#d9b8a4" stroke-width="2" opacity="0.6" filter="url(#bl1)"/>
<!-- nose -->
<path d="M372 430C368 460 356 480 344 495C342 508 352 514 368 510C378 518 400 518 412 510C428 514 438 506 434 495C424 480 414 460 410 430" fill="none" stroke="#d8b39d" stroke-width="5" opacity="0.5" filter="url(#bl3)"/>
<ellipse cx="363" cy="505" rx="8" ry="3.5" fill="#4d322c" opacity="0.9"/>
<ellipse cx="415" cy="505" rx="8" ry="3.5" fill="#4d322c" opacity="0.9"/>
<!-- mouth -->
<path d="M318 557C345 555 370 554 386 555C405 554 430 555 455 556C440 574 415 586 386 588C355 586 332 574 318 557Z" fill="#eab3a4"/><ellipse cx="386" cy="572" rx="30" ry="6" fill="#f3cbbf" opacity="0.7" filter="url(#bl1)"/>
<path d="M320 556C340 549 365 546 386 548C410 546 432 549 455 555C430 558 405 560 386 560C365 560 340 559 320 556Z" fill="#dc9b8c"/><path d="M314 555C345 558 365 561 386 561C410 561 435 558 458 553" fill="none" stroke="#b9736a" stroke-width="2.5" filter="url(#bl1)"/>
<!-- shirt -->
<path d="M250 838C300 860 350 868 393 868C450 866 500 852 534 832L534 1013L250 1013Z" fill="#efefef"/>
<path d="M262 875C310 890 360 898 400 897C450 895 490 885 526 870" fill="none" stroke="#d3d3d3" stroke-width="3" filter="url(#bl1)"/>
<!-- jacket -->
<path d="M0 834L102 789C140 775 178 755 215 725L246 697L253 839L289 1013L0 1013Z" fill="#2b2b2b"/>
<path d="M760 834L649 776C620 765 581 745 560 722L528 687L533 834L492 1013L760 1013Z" fill="#2b2b2b"/>
<path d="M126 825L157 848L109 880L287 1013" fill="none" stroke="#1f1f1f" stroke-width="2"/>
<path d="M649 827L618 848L659 882L492 1013" fill="none" stroke="#1f1f1f" stroke-width="2"/>
</g>
</svg><div class="a" style="left:1px;top:240px;width:57px;height:1068px;background:#535353;border-radius:5px 5px 0 0;box-shadow:0 0 0 1px #3a3a3a"></div><div class="a" style="left:1px;top:240px;width:57px;height:20px;background:#424242;border-radius:5px 5px 0 0"></div><svg style="left:14px;top:246px" width="11" height="9" viewBox="0 0 11 9"><path d="M1 1l3.5 3.5L1 8M6 1l3.5 3.5L6 8" fill="none" stroke="#e0e0e0" stroke-width="1.3"/></svg><svg style="left:40px;top:246px" width="10" height="10" viewBox="0 0 10 10"><path d="M1 1l8 8M9 1l-8 8" stroke="#d8d8d8" stroke-width="1.8"/></svg><div class="a" style="left:15px;top:265px;width:28px;height:6px;background:repeating-linear-gradient(90deg,#3e3e3e 0 1px,transparent 1px 3px)"></div><div class="a" style="left:7px;top:325px;width:47px;height:37px;background:#383838;border:1px solid #5e5e5e;border-radius:5px"></div><svg style="left:16px;top:292px" width="26" height="26" viewBox="0 0 26 26"><path d="M13 1l4 4h-3v7h7V9l4 4-4 4v-3h-7v7h3l-4 4-4-4h3v-7H5v3l-4-4 4-4v3h7V5H9z" fill="#dadada"/></svg><svg style="left:44px;top:313px" width="6" height="6" viewBox="0 0 6 6"><path d="M6 0V6H0z" fill="#c8c8c8"/></svg><svg style="left:16px;top:330px" width="26" height="26" viewBox="0 0 26 26"><rect x="3" y="5" width="20" height="16" fill="none" stroke="#e6e6e6" stroke-width="2" stroke-dasharray="5 3"/></svg><svg style="left:44px;top:351px" width="6" height="6" viewBox="0 0 6 6"><path d="M6 0V6H0z" fill="#c8c8c8"/></svg><svg style="left:16px;top:369px" width="26" height="26" viewBox="0 0 26 26"><ellipse cx="14" cy="10" rx="10" ry="7" fill="none" stroke="#dadada" stroke-width="2"/><circle cx="6" cy="17" r="3" fill="none" stroke="#dadada" stroke-width="1.8"/><path d="M7 20q2 3-1 5" fill="none" stroke="#dadada" stroke-width="1.8"/></svg><svg style="left:44px;top:390px" width="6" height="6" viewBox="0 0 6 6"><path d="M6 0V6H0z" fill="#c8c8c8"/></svg><svg style="left:16px;top:409px" width="26" height="26" viewBox="0 0 26 26"><path d="M4 24L17 11" stroke="#dadada" stroke-width="5" stroke-linecap="round"/><path d="M10 2l1 3 3 1-3 1-1 3-1-3-3-1 3-1zM22 2l1 2.5 2.5 1-2.5 1-1 2.5-1-2.5-2.5-1 2.5-1zM23 13l.8 2 2 .8-2 .8-.8 2-.8-2-2-.8 2-.8z" fill="#dadada"/></svg><svg style="left:44px;top:430px" width="6" height="6" viewBox="0 0 6 6"><path d="M6 0V6H0z" fill="#c8c8c8"/></svg><svg style="left:16px;top:446px" width="26" height="26" viewBox="0 0 26 26"><path d="M7 1v18h18M1 7h18v18" fill="none" stroke="#dadada" stroke-width="2.2"/></svg><svg style="left:44px;top:467px" width="6" height="6" viewBox="0 0 6 6"><path d="M6 0V6H0z" fill="#c8c8c8"/></svg><svg style="left:16px;top:487px" width="26" height="26" viewBox="0 0 26 26"><rect x="3" y="4" width="22" height="19" fill="none" stroke="#dadada" stroke-width="2"/><path d="M3 4l22 19M25 4L3 23" stroke="#dadada" stroke-width="1.8"/><rect x="1" y="2" width="4" height="4" fill="#dadada"/><rect x="23" y="2" width="4" height="4" fill="#dadada"/><rect x="1" y="21" width="4" height="4" fill="#dadada"/><rect x="23" y="21" width="4" height="4" fill="#dadada"/></svg><svg style="left:16px;top:525px" width="26" height="26" viewBox="0 0 26 26"><path d="M17.5 1.5Q20 0 22.5 1Q25.5 2.5 25 6Q24.8 7.5 23.5 9L21.5 11L15.5 5Z" fill="#dadada"/><path d="M13.5 4L22.5 13L20.5 15L11.5 6Z" fill="#dadada"/><path d="M15 8L5 18Q2.5 20.5 4 22.5Q6 24.5 8.5 22L18.5 12" fill="none" stroke="#dadada" stroke-width="2"/></svg><svg style="left:44px;top:546px" width="6" height="6" viewBox="0 0 6 6"><path d="M6 0V6H0z" fill="#c8c8c8"/></svg><svg style="left:16px;top:563px" width="26" height="26" viewBox="0 0 26 26"><g transform="rotate(-40 13 13)"><rect x="0" y="7.5" width="26" height="11" rx="3.5" fill="#dadada"/><rect x="8" y="8.5" width="10" height="9" fill="#535353" opacity="0.35"/><circle cx="10" cy="11" r="1" fill="#535353"/><circle cx="13" cy="11" r="1" fill="#535353"/><circle cx="16" cy="11" r="1" fill="#535353"/><circle cx="10" cy="15" r="1" fill="#535353"/><circle cx="13" cy="15" r="1" fill="#535353"/><circle cx="16" cy="15" r="1" fill="#535353"/></g></svg><svg style="left:44px;top:584px" width="6" height="6" viewBox="0 0 6 6"><path d="M6 0V6H0z" fill="#c8c8c8"/></svg><svg style="left:16px;top:603px" width="26" height="26" viewBox="0 0 26 26"><path d="M23 1.5Q25.5 1.5 24.5 4L14.5 17L11 14L21 2.5Q22 1.5 23 1.5Z" fill="#dadada"/><path d="M10 15L13.5 18.5Q13 23.5 8 25Q5 25.8 1.5 25Q4 23.5 4.8 20Q6 15.5 10 15Z" fill="#dadada"/></svg><svg style="left:44px;top:624px" width="6" height="6" viewBox="0 0 6 6"><path d="M6 0V6H0z" fill="#c8c8c8"/></svg><svg style="left:16px;top:642px" width="26" height="26" viewBox="0 0 26 26"><circle cx="13" cy="6" r="4" fill="#dadada"/><rect x="11" y="8" width="4" height="6" fill="#dadada"/><path d="M4 14h18v4H4z" fill="#dadada"/><rect x="4" y="20" width="18" height="2" fill="#dadada"/></svg><svg style="left:44px;top:663px" width="6" height="6" viewBox="0 0 6 6"><path d="M6 0V6H0z" fill="#c8c8c8"/></svg><svg style="left:16px;top:682px" width="26" height="26" viewBox="0 0 26 26"><path d="M23.5 2Q26 2 25 4.5L16 16.5L13 13.5L22 3Q22.8 2 23.5 2Z" fill="#dadada"/><path d="M12 14.5L15 17.5Q14.5 22 10 23.5Q7 24.5 4 24Q6 22.5 6.8 19.5Q8 15 12 14.5Z" fill="#dadada"/><path d="M15 5Q10 3 6 6" fill="none" stroke="#dadada" stroke-width="1.6"/><path d="M2 8.5L8 4.5L8.5 10z" fill="#dadada"/><circle cx="21" cy="12" r="0.9" fill="#dadada"/><circle cx="20" cy="15.5" r="0.9" fill="#dadada"/><circle cx="18" cy="19" r="0.9" fill="#dadada"/><circle cx="15.5" cy="22" r="0.9" fill="#dadada"/></svg><svg style="left:44px;top:703px" width="6" height="6" viewBox="0 0 6 6"><path d="M6 0V6H0z" fill="#c8c8c8"/></svg><svg style="left:16px;top:721px" width="26" height="26" viewBox="0 0 26 26"><path d="M16 2l9 8-11 11H6l-4-4z" fill="none" stroke="#dadada" stroke-width="2"/><path d="M16 2l9 8-7 7-9-8z" fill="#dadada"/><path d="M14 22h11" stroke="#dadada" stroke-width="2"/></svg><svg style="left:44px;top:742px" width="6" height="6" viewBox="0 0 6 6"><path d="M6 0V6H0z" fill="#c8c8c8"/></svg><div class="a" style="left:17px;top:763px;width:24px;height:20px;border:2px solid #dadada;background:linear-gradient(90deg,#2a2a2a,#e0e0e0)"></div><svg style="left:44px;top:780px" width="6" height="6" viewBox="0 0 6 6"><path d="M6 0V6H0z" fill="#c8c8c8"/></svg><svg style="left:16px;top:797px" width="26" height="26" viewBox="0 0 26 26"><path d="M13 2L23 24H3z" fill="#dadada"/></svg><svg style="left:44px;top:818px" width="6" height="6" viewBox="0 0 6 6"><path d="M6 0V6H0z" fill="#c8c8c8"/></svg><svg style="left:16px;top:838px" width="26" height="26" viewBox="0 0 26 26"><path d="M2 12Q2 4 10 3.5Q17 3.5 21 8L25 11V23Q22 19 17 19L10 20Q2 20 2 12Z" fill="#dadada"/><circle cx="9.5" cy="12.5" r="3.8" fill="#535353"/></svg><svg style="left:44px;top:859px" width="6" height="6" viewBox="0 0 6 6"><path d="M6 0V6H0z" fill="#c8c8c8"/></svg><svg style="left:16px;top:874px" width="26" height="26" viewBox="0 0 26 26"><path d="M21 3l3 3-2 2-3-3zM18 6l3 3-3 9-10 4-4 2 2-4 4-10z" fill="none" stroke="#dadada" stroke-width="2" stroke-linejoin="round"/><circle cx="12" cy="15" r="2" fill="#dadada"/><path d="M5 22l6-6" stroke="#dadada" stroke-width="1.2"/></svg><svg style="left:44px;top:895px" width="6" height="6" viewBox="0 0 6 6"><path d="M6 0V6H0z" fill="#c8c8c8"/></svg><svg style="left:16px;top:916px" width="26" height="26" viewBox="0 0 26 26"><path d="M3 3h20v6h-2l-1-3h-5v16h3v2H8v-2h3V6H6L5 9H3z" fill="#dadada"/></svg><svg style="left:44px;top:937px" width="6" height="6" viewBox="0 0 6 6"><path d="M6 0V6H0z" fill="#c8c8c8"/></svg><svg style="left:16px;top:955px" width="26" height="26" viewBox="0 0 26 26"><path d="M7 2v18l4-4 4 8 3-1-4-8h6z" fill="#1e1e1e" stroke="#dadada" stroke-width="2" stroke-linejoin="round"/></svg><svg style="left:44px;top:976px" width="6" height="6" viewBox="0 0 6 6"><path d="M6 0V6H0z" fill="#c8c8c8"/></svg><svg style="left:16px;top:993px" width="26" height="26" viewBox="0 0 26 26"><rect x="2" y="5" width="22" height="17" fill="#6e6e6e" stroke="#dadada" stroke-width="2"/></svg><svg style="left:44px;top:1014px" width="6" height="6" viewBox="0 0 6 6"><path d="M6 0V6H0z" fill="#c8c8c8"/></svg><svg style="left:16px;top:1032px" width="26" height="26" viewBox="0 0 26 26"><path d="M8 14V5q0-2 1.5-2T11 5v7V3q0-2 1.5-2T14 3v9V4q0-2 1.5-2T17 4v9V7q0-2 1.5-2T20 7v9q0 8-7 8-5 0-8-5l-3-5q-1-2 1-3 2-1 3 1z" fill="#dadada"/></svg><svg style="left:44px;top:1053px" width="6" height="6" viewBox="0 0 6 6"><path d="M6 0V6H0z" fill="#c8c8c8"/></svg><svg style="left:16px;top:1071px" width="26" height="26" viewBox="0 0 26 26"><circle cx="11" cy="11" r="8" fill="none" stroke="#dadada" stroke-width="2.2"/><path d="M17 17l7 7" stroke="#dadada" stroke-width="3" stroke-linecap="round"/><path d="M7 8q2-3 5-2" fill="none" stroke="#dadada" stroke-width="1.2"/></svg><svg style="left:16px;top:1111px" width="26" height="26" viewBox="0 0 26 26"><circle cx="5" cy="13" r="2.6" fill="#dadada"/><circle cx="13" cy="13" r="2.6" fill="#dadada"/><circle cx="21" cy="13" r="2.6" fill="#dadada"/></svg><svg style="left:44px;top:1132px" width="6" height="6" viewBox="0 0 6 6"><path d="M6 0V6H0z" fill="#c8c8c8"/></svg><svg style="left:8px;top:1153px" width="17" height="16" viewBox="0 0 17 16"><rect x="5" y="5" width="11" height="10" fill="#d0d0d0"/><rect x="1" y="1" width="9" height="9" fill="#111" stroke="#d0d0d0" stroke-width="1.5"/></svg><svg style="left:33px;top:1152px" width="17" height="16" viewBox="0 0 17 16"><path d="M4 4.5h8.5V12" fill="none" stroke="#d8d8d8" stroke-width="2"/><path d="M0 4.5L5 0.5V8.5z" fill="#d8d8d8"/><path d="M8 11h9l-4.5 4.5z" fill="#d8d8d8"/></svg><div class="a" style="left:23px;top:1191px;width:29px;height:29px;background:#fff;border:1px solid #333"></div><div class="a" style="left:8px;top:1176px;width:29px;height:29px;background:#000;border:2px solid #fff;box-shadow:0 0 0 1px #333"></div><svg style="left:17px;top:1236px" width="26" height="21" viewBox="0 0 26 21"><rect x="1" y="1" width="24" height="19" fill="none" stroke="#d8d8d8" stroke-width="1.2"/><circle cx="13" cy="10.5" r="5.5" fill="none" stroke="#d0d0d0" stroke-width="1.4" stroke-dasharray="2 1.5"/></svg><svg style="left:17px;top:1275px" width="26" height="20" viewBox="0 0 26 20"><path d="M8 6H1v13h17v-6" fill="none" stroke="#d8d8d8" stroke-width="1.3"/><rect x="8" y="1" width="17" height="12" fill="#535353" stroke="#d8d8d8" stroke-width="1.3"/></svg><svg style="left:44px;top:1296px" width="6" height="6" viewBox="0 0 6 6"><path d="M6 0V6H0z" fill="#c8c8c8"/></svg><div class="a" style="left:1739px;top:210px;width:377px;height:821px;background:#535353;border-radius:5px 5px 0 0;box-shadow:0 0 0 1px #2e2e2e"></div><div class="a" style="left:1739px;top:210px;width:377px;height:20px;background:#424242;border-radius:5px 5px 0 0"></div><svg style="left:2070px;top:215px" width="12" height="9" viewBox="0 0 12 9"><path d="M5 1L1.5 4.5 5 8M10 1L6.5 4.5 10 8" fill="none" stroke="#e0e0e0" stroke-width="1.3"/></svg><svg style="left:2097px;top:215px" width="10" height="10" viewBox="0 0 10 10"><path d="M1 1l8 8M9 1l-8 8" stroke="#e0e0e0" stroke-width="1.8"/></svg><div class="a" style="left:1739px;top:229px;width:377px;height:1px;background:#363636;"></div><div class="a" style="left:1739px;top:230px;width:377px;height:42px;background:#424242;"></div><div class="a" style="left:1740px;top:231px;width:58px;height:41px;background:#535353;"></div><div class="t" style="left:1754px;top:238px;font-size:19px;color:#e8e8e8;;transform:scaleX(0.8684)">문자</div><svg style="left:2091px;top:246px" width="15" height="12" viewBox="0 0 15 12"><path d="M0 1.5h15M0 4.5h15M0 7.5h15M0 10.5h15" stroke="#d6d6d6" stroke-width="1.6"/></svg><div class="a" style="left:1746px;top:293px;width:178px;height:27px;background:#454545;border:1px solid #3b3b3b;border-radius:3px"></div><div class="a" style="left:1902px;top:294px;width:1px;height:25px;background:#3b3b3b;"></div><svg style="left:1908px;top:304px" width="11" height="7" viewBox="0 0 11 7"><path d="M1 1l4.5 4.5L10 1" fill="none" stroke="#cfcfcf" stroke-width="1.3"/></svg><div class="t" style="left:1750px;top:299px;font-size:17px;color:#f2f2f2;;transform:scaleX(0.8657)">a고딕12</div><div class="a" style="left:1951px;top:293px;width:110px;height:27px;background:#454545;border:1px solid #3b3b3b;border-radius:3px"></div><div class="a" style="left:2039px;top:294px;width:1px;height:25px;background:#3b3b3b;"></div><svg style="left:2045px;top:304px" width="11" height="7" viewBox="0 0 11 7"><path d="M1 1l4.5 4.5L10 1" fill="none" stroke="#cfcfcf" stroke-width="1.3"/></svg><div class="t" style="left:1961px;top:297px;font-size:17px;color:#f2f2f2;">-</div><svg style="left:1745px;top:334px" width="26" height="24" viewBox="0 0 26 24"><path d="M7 4h17v4h-1.5l-1-2H17v15h2v2h-8v-2h2V6H9.5l-1 2H7z" fill="#d6d6d6"/><path d="M0 13h9v2.5H8l-.5-1H5.5v7h1V23h-4v-1.5h1v-7H1.5l-.5 1H0z" fill="#d6d6d6"/></svg><div class="a" style="left:1777px;top:332px;width:125px;height:27px;background:#454545;border:1px solid #3b3b3b;border-radius:3px"></div><div class="a" style="left:1880px;top:333px;width:1px;height:25px;background:#3b3b3b;"></div><svg style="left:1886px;top:343px" width="11" height="7" viewBox="0 0 11 7"><path d="M1 1l4.5 4.5L10 1" fill="none" stroke="#cfcfcf" stroke-width="1.3"/></svg><div class="t" style="left:1781px;top:338px;font-size:17px;color:#f2f2f2;;transform:scaleX(1.0089)">10.23 pt</div><svg style="left:1913px;top:332px" width="26" height="25" viewBox="0 0 26 25"><path d="M11 8l4-7 4 7M12 6h6M11 19l4-7 4 7M12 17h6M9 10h13M9 21h13" fill="none" stroke="#d6d6d6" stroke-width="1.5"/><path d="M3 10v12M0 13l3-3 3 3M0 19l3 3 3-3" fill="none" stroke="#d6d6d6" stroke-width="1.5"/></svg><div class="a" style="left:1944px;top:332px;width:117px;height:27px;background:#454545;border:1px solid #3b3b3b;border-radius:3px"></div><div class="a" style="left:2039px;top:333px;width:1px;height:25px;background:#3b3b3b;"></div><svg style="left:2045px;top:343px" width="11" height="7" viewBox="0 0 11 7"><path d="M1 1l4.5 4.5L10 1" fill="none" stroke="#cfcfcf" stroke-width="1.3"/></svg><div class="t" style="left:1948px;top:338px;font-size:17px;color:#f2f2f2;;transform:scaleX(0.8825)">(자동)</div><div class="t" style="left:1745px;top:369px;font-size:17px;color:#d6d6d6;;transform:scaleX(0.9487)">V/A</div><svg style="left:1757px;top:384px" width="14" height="8" viewBox="0 0 14 8"><path d="M13 4H2M5 1L1.5 4 5 7" fill="none" stroke="#d6d6d6" stroke-width="1.5"/></svg><div class="a" style="left:1777px;top:365px;width:125px;height:27px;background:#454545;border:1px solid #3b3b3b;border-radius:3px"></div><div class="a" style="left:1880px;top:366px;width:1px;height:25px;background:#3b3b3b;"></div><svg style="left:1886px;top:376px" width="11" height="7" viewBox="0 0 11 7"><path d="M1 1l4.5 4.5L10 1" fill="none" stroke="#cfcfcf" stroke-width="1.3"/></svg><div class="t" style="left:1781px;top:371px;font-size:17px;color:#f2f2f2;">0</div><svg style="left:1913px;top:366px" width="27" height="25" viewBox="0 0 27 25"><rect x="1" y="1" width="25" height="14" fill="#d6d6d6"/><text x="13.5" y="13.5" font-size="14" font-weight="bold" text-anchor="middle" fill="#535353" font-family="Liberation Sans">VA</text><path d="M2 21h23M5 18l-3 3 3 3M22 18l3 3-3 3" fill="none" stroke="#d6d6d6" stroke-width="1.5"/></svg><div class="a" style="left:1944px;top:365px;width:117px;height:27px;background:#454545;border:1px solid #3b3b3b;border-radius:3px"></div><div class="a" style="left:2039px;top:366px;width:1px;height:25px;background:#3b3b3b;"></div><svg style="left:2045px;top:376px" width="11" height="7" viewBox="0 0 11 7"><path d="M1 1l4.5 4.5L10 1" fill="none" stroke="#cfcfcf" stroke-width="1.3"/></svg><div class="t" style="left:1948px;top:371px;font-size:17px;color:#f2f2f2;">0</div><svg style="left:1747px;top:400px" width="23" height="23" viewBox="0 0 23 23"><path d="M2 1v15M21 1v15" stroke="#d6d6d6" stroke-width="1" stroke-dasharray="1.5 1.5"/><text x="11.5" y="13" font-size="13" text-anchor="middle" fill="#d6d6d6">あ</text><path d="M1 20h7M6 18l2 2-2 2M22 20h-7M17 18l-2 2 2 2" fill="none" stroke="#d6d6d6" stroke-width="1.4"/></svg><div class="a" style="left:1777px;top:398px;width:125px;height:27px;background:#454545;border:1px solid #3b3b3b;border-radius:3px"></div><div class="a" style="left:1880px;top:399px;width:1px;height:25px;background:#3b3b3b;"></div><svg style="left:1886px;top:409px" width="11" height="7" viewBox="0 0 11 7"><path d="M1 1l4.5 4.5L10 1" fill="none" stroke="#cfcfcf" stroke-width="1.3"/></svg><div class="t" style="left:1781px;top:404px;font-size:17px;color:#f2f2f2;;transform:scaleX(0.9765)">0%</div><svg style="left:1745px;top:433px" width="27" height="25" viewBox="0 0 27 25"><path d="M11 2h15v4h-1.5l-1-2H20v17h2v2h-8v-2h2V4h-3.5l-1 2H11z" fill="#d6d6d6"/><path d="M4 3v19M1 6l3-3 3 3M1 19l3 3 3-3" fill="none" stroke="#d6d6d6" stroke-width="1.6"/></svg><div class="a" style="left:1777px;top:431px;width:81px;height:30px;background:#454545;border:1px solid #3b3b3b;border-radius:0px"></div><div class="t" style="left:1781px;top:439px;font-size:17px;color:#f2f2f2;;transform:scaleX(0.9659)">100%</div><svg style="left:1949px;top:434px" width="27" height="26" viewBox="0 0 27 26"><path d="M4 1h19v4h-1.5l-1-2H16v14h2v2h-8v-2h2V3H6.5l-1 2H4z" fill="#d6d6d6"/><path d="M2 23h23M5 20l-3 3 3 3M22 20l3 3-3 3" fill="none" stroke="#d6d6d6" stroke-width="1.6"/></svg><div class="a" style="left:1980px;top:431px;width:82px;height:30px;background:#454545;border:1px solid #3b3b3b;border-radius:0px"></div><div class="t" style="left:1985px;top:439px;font-size:17px;color:#f2f2f2;;transform:scaleX(0.9659)">100%</div><svg style="left:1747px;top:471px" width="24" height="26" viewBox="0 0 24 26"><text x="0" y="13" font-size="15" fill="#d6d6d6" font-family="Liberation Sans">A</text><text x="13" y="8" font-size="10" fill="#d6d6d6" font-family="Liberation Sans">a</text><path d="M0 16h12M18 25V11M15 14l3-3 3 3" fill="none" stroke="#d6d6d6" stroke-width="1.5"/></svg><div class="a" style="left:1778px;top:467px;width:81px;height:31px;background:#454545;border:1px solid #3b3b3b;border-radius:0px"></div><div class="t" style="left:1782px;top:475px;font-size:17px;color:#f2f2f2;;transform:scaleX(0.9873)">0 pt</div><div class="t" style="left:1927px;top:474px;font-size:17px;color:#d0d0d0;;transform:scaleX(1.0585)">색상:</div><div class="a" style="left:1980px;top:467px;width:82px;height:31px;background:#000000;border:1px solid #3b3b3b"></div><div class="t" style="left:1758px;top:510px;width:40px;text-align:center;font-family:'Liberation Serif',serif;font-size:22px;font-weight:bold;color:#e0e0e0;">T</div><div class="t" style="left:1793px;top:510px;width:40px;text-align:center;font-family:'Liberation Serif',serif;font-size:22px;font-weight:bold;color:#e0e0e0;font-style:italic;">T</div><div class="t" style="left:1830px;top:510px;width:40px;text-align:center;font-family:'Liberation Serif',serif;font-size:22px;font-weight:bold;color:#e0e0e0;">TT</div><div class="t" style="left:1866px;top:510px;width:40px;text-align:center;font-family:'Liberation Serif',serif;font-size:22px;font-weight:bold;color:#e0e0e0;">Tт</div><div class="t" style="left:1902px;top:510px;width:40px;text-align:center;font-family:'Liberation Serif',serif;font-size:22px;font-weight:bold;color:#e0e0e0;">T¹</div><div class="t" style="left:1939px;top:510px;width:40px;text-align:center;font-family:'Liberation Serif',serif;font-size:22px;font-weight:bold;color:#e0e0e0;">T₁</div><div class="t" style="left:1974px;top:510px;width:40px;text-align:center;font-family:'Liberation Serif',serif;font-size:22px;font-weight:bold;color:#e0e0e0;text-decoration:underline;">T</div><div class="t" style="left:2009px;top:510px;width:40px;text-align:center;font-family:'Liberation Serif',serif;font-size:22px;font-weight:bold;color:#e0e0e0;text-decoration:line-through;">T</div><div class="t" style="left:1756px;top:550px;width:44px;text-align:center;font-family:'Liberation Serif',serif;font-size:23px;font-weight:bold;color:#9a9a9a">ﬁ</div><div class="t" style="left:1791px;top:550px;width:44px;text-align:center;font-family:'Liberation Serif',serif;font-size:23px;font-weight:bold;color:#9a9a9a">ℴ</div><div class="t" style="left:1828px;top:550px;width:44px;text-align:center;font-family:'Liberation Serif',serif;font-size:23px;font-weight:bold;color:#9a9a9a">ﬆ</div><div class="t" style="left:1864px;top:550px;width:44px;text-align:center;font-family:'Liberation Serif',serif;font-size:23px;font-weight:bold;color:#9a9a9a">𝒜</div><div class="t" style="left:1900px;top:550px;width:44px;text-align:center;font-family:'Liberation Serif',serif;font-size:23px;font-weight:bold;color:#9a9a9a">aa</div><div class="t" style="left:1937px;top:550px;width:44px;text-align:center;font-family:'Liberation Serif',serif;font-size:23px;font-weight:bold;color:#9a9a9a">T</div><div class="t" style="left:1972px;top:550px;width:44px;text-align:center;font-family:'Liberation Serif',serif;font-size:23px;font-weight:bold;color:#9a9a9a">1ˢᵗ</div><div class="t" style="left:2007px;top:550px;width:44px;text-align:center;font-family:'Liberation Serif',serif;font-size:23px;font-weight:bold;color:#9a9a9a">½</div><svg style="left:1946px;top:551px" width="24" height="6" viewBox="0 0 24 6"><path d="M1 4h20M17 1l4 3-4 3" fill="none" stroke="#9a9a9a" stroke-width="1.6"/></svg><div class="a" style="left:1746px;top:587px;width:179px;height:30px;background:#454545;border:1px solid #3b3b3b;border-radius:4px"></div><svg style="left:1910px;top:600px" width="11" height="7" viewBox="0 0 11 7"><path d="M1 1l4.5 4.5L10 1" fill="none" stroke="#cfcfcf" stroke-width="1.3"/></svg><div class="t" style="left:1760px;top:594px;font-size:19px;color:#f0f0f0;;transform:scaleX(0.8947)">스페인어</div><div class="t" style="left:1932px;top:591px;font-size:19px;color:#d6d6d6;"><span style="font-size:14px;vertical-align:top">a</span>a</div><div class="a" style="left:1963px;top:587px;width:99px;height:30px;background:#454545;border:1px solid #3b3b3b;border-radius:4px"></div><svg style="left:2047px;top:600px" width="11" height="7" viewBox="0 0 11 7"><path d="M1 1l4.5 4.5L10 1" fill="none" stroke="#cfcfcf" stroke-width="1.3"/></svg><div class="t" style="left:1976px;top:594px;font-size:19px;color:#f0f0f0;;transform:scaleX(0.8915)">선명...</div><div class="a" style="left:1739px;top:623px;width:377px;height:4px;background:#2f2f2f;"></div><div class="a" style="left:1739px;top:627px;width:377px;height:41px;background:#424242;"></div><div class="a" style="left:1740px;top:627px;width:58px;height:41px;background:#474747;"></div><div class="a" style="left:1798px;top:627px;width:60px;height:41px;background:#535353;"></div><div class="t" style="left:1754px;top:636px;font-size:19px;color:#bdbdbd;;transform:scaleX(0.8421)">단락</div><div class="t" style="left:1814px;top:636px;font-size:19px;color:#ececec;;transform:scaleX(0.8421)">속성</div><svg style="left:2091px;top:643px" width="15" height="12" viewBox="0 0 15 12"><path d="M0 1.5h15M0 4.5h15M0 7.5h15M0 10.5h15" stroke="#d6d6d6" stroke-width="1.6"/></svg><div class="a" style="left:1755px;top:677px;width:34px;height:34px;background:#3a3a3a;border-radius:4px"></div><svg style="left:1762px;top:685px" width="21" height="18" viewBox="0 0 21 18"><rect x="1" y="1" width="19" height="16" fill="none" stroke="#dcdcdc" stroke-width="2"/><path d="M2 16V11l4-4 3 3 3-3 6 6v3z" fill="#dcdcdc"/><rect x="14" y="4" width="3" height="3" fill="#dcdcdc"/></svg><div class="t" style="left:1799px;top:686px;font-size:19px;color:#d6d6d6;;transform:scaleX(0.9274)">픽셀 레이어</div><div class="a" style="left:1739px;top:719px;width:377px;height:2px;background:#3b3b3b;"></div><div class="a" style="left:2090px;top:721px;width:24px;height:260px;background:#4b4b4b;"></div><svg style="left:2097px;top:731px" width="11" height="7" viewBox="0 0 11 7"><path d="M1 6l4.5-4.5L10 6" fill="none" stroke="#9a9a9a" stroke-width="1.2"/></svg><div class="a" style="left:2093px;top:747px;width:18px;height:106px;background:#6a6a6a;border-radius:3px"></div><svg style="left:2097px;top:962px" width="11" height="7" viewBox="0 0 11 7"><path d="M1 1l4.5 4.5L10 1" fill="none" stroke="#9a9a9a" stroke-width="1.2"/></svg><svg style="left:1750px;top:737px" width="13" height="8" viewBox="0 0 13 8"><path d="M1 1l5.5 5.5L12 1" fill="none" stroke="#d6d6d6" stroke-width="1.3"/></svg><div class="t" style="left:1773px;top:731px;font-size:19px;color:#f0f0f0;font-weight:bold;transform:scaleX(0.9211)">변형</div><div class="t" style="left:1824px;top:778px;font-size:18px;color:#d0d0d0;;transform:scaleX(0.9444)">폭</div><div class="a" style="left:1852px;top:773px;width:85px;height:31px;background:#454545;border:1px solid #3b3b3b;border-radius:0px"></div><div class="t" style="left:1857px;top:780px;font-size:17px;color:#f2f2f2;;transform:scaleX(0.9033)">1124 픽셀</div><div class="t" style="left:1952px;top:779px;font-size:18px;color:#d0d0d0;;transform:scaleX(0.9155)">X</div><div class="a" style="left:1972px;top:773px;width:85px;height:31px;background:#454545;border:1px solid #3b3b3b;border-radius:0px"></div><div class="t" style="left:1976px;top:780px;font-size:17px;color:#f2f2f2;;transform:scaleX(0.8935)">-169 픽셀</div><div class="t" style="left:1807px;top:822px;font-size:18px;color:#d0d0d0;;transform:scaleX(0.9444)">높이</div><div class="a" style="left:1852px;top:816px;width:85px;height:31px;background:#454545;border:1px solid #3b3b3b;border-radius:0px"></div><div class="t" style="left:1857px;top:823px;font-size:17px;color:#f2f2f2;;transform:scaleX(0.8883)">1892 픽셀</div><div class="t" style="left:1952px;top:822px;font-size:18px;color:#d0d0d0;;transform:scaleX(0.9155)">Y</div><div class="a" style="left:1972px;top:816px;width:85px;height:31px;background:#454545;border:1px solid #3b3b3b;border-radius:0px"></div><div class="t" style="left:1976px;top:823px;font-size:17px;color:#f2f2f2;;transform:scaleX(0.8508)">0 픽셀</div><div class="a" style="left:1752px;top:791px;width:37px;height:39px;background:#3a3a3a;border:1px solid #4a4a4a;border-radius:4px"></div><svg style="left:1764px;top:799px" width="13" height="22" viewBox="0 0 13 22"><rect x="2" y="1" width="9" height="10" rx="4.5" fill="none" stroke="#dadada" stroke-width="2.2"/><rect x="2" y="11" width="9" height="10" rx="4.5" fill="none" stroke="#dadada" stroke-width="2.2"/><path d="M6.5 7v8" stroke="#dadada" stroke-width="2"/></svg><svg style="left:1799px;top:870px" width="21" height="14" viewBox="0 0 21 14"><path d="M20 13H1L14 1" fill="none" stroke="#d6d6d6" stroke-width="1.6"/><path d="M12 4q4 4 3 9" fill="none" stroke="#d6d6d6" stroke-width="1.4"/></svg><div class="a" style="left:1829px;top:864px;width:87px;height:27px;background:#454545;border:1px solid #3b3b3b;border-radius:3px"></div><div class="a" style="left:1894px;top:865px;width:1px;height:25px;background:#3b3b3b;"></div><svg style="left:1900px;top:875px" width="11" height="7" viewBox="0 0 11 7"><path d="M1 1l4.5 4.5L10 1" fill="none" stroke="#cfcfcf" stroke-width="1.3"/></svg><div class="t" style="left:1833px;top:869px;font-size:17px;color:#f2f2f2;;transform:scaleX(1.0027)">0.00°</div><svg style="left:1984px;top:866px" width="24" height="23" viewBox="0 0 24 23"><path d="M1 4v16l8-8z" fill="none" stroke="#d6d6d6" stroke-width="1.5"/><path d="M23 4v16l-8-8z" fill="#d6d6d6"/><path d="M12 0v23" stroke="#d6d6d6" stroke-width="1.2" stroke-dasharray="2 1.5"/></svg><svg style="left:2028px;top:866px" width="21" height="23" viewBox="0 0 21 23"><path d="M3 1h16l-8 7z" fill="none" stroke="#d6d6d6" stroke-width="1.5"/><path d="M3 22h16l-8-8z" fill="#d6d6d6"/><path d="M0 11.5h21" stroke="#d6d6d6" stroke-width="1.2" stroke-dasharray="2 1.5"/></svg><div class="a" style="left:1739px;top:913px;width:351px;height:2px;background:#3b3b3b;"></div><svg style="left:1750px;top:933px" width="13" height="8" viewBox="0 0 13 8"><path d="M1 1l5.5 5.5L12 1" fill="none" stroke="#d6d6d6" stroke-width="1.3"/></svg><div class="t" style="left:1773px;top:927px;font-size:19px;color:#f0f0f0;font-weight:bold;transform:scaleX(0.9852)">정렬 및 분포</div><div class="a" style="left:1739px;top:1018px;width:377px;height:3px;background:#333333;"></div><div class="a" style="left:1739px;top:1021px;width:377px;height:10px;background:#4b4b4b;"></div><div class="a" style="left:1912px;top:1022px;width:28px;height:6px;background:repeating-linear-gradient(90deg,#3c3c3c 0 1px,transparent 1px 3px)"></div><div class="a" style="left:2183px;top:91px;width:377px;height:1448px;background:#535353;"></div><div class="a" style="left:2558px;top:91px;width:2px;height:1451px;background:#2f2f2f;"></div><div class="a" style="left:2183px;top:91px;width:375px;height:18px;background:#424242;"></div><svg style="left:2540px;top:95px" width="11" height="9" viewBox="0 0 11 9"><path d="M1 1l3.5 3.5L1 8M6 1l3.5 3.5L6 8" fill="none" stroke="#e0e0e0" stroke-width="1.3"/></svg><div class="a" style="left:2183px;top:108px;width:375px;height:2px;background:#3a3a3a;"></div><div class="a" style="left:2183px;top:110px;width:375px;height:41px;background:#424242;"></div><div class="a" style="left:2184px;top:110px;width:108px;height:41px;background:#535353;"></div><div class="t" style="left:2198px;top:118px;font-size:19px;color:#e8e8e8;;transform:scaleX(0.8526)">내비게이터</div><svg style="left:2535px;top:125px" width="15" height="12" viewBox="0 0 15 12"><path d="M0 1.5h15M0 4.5h15M0 7.5h15M0 10.5h15" stroke="#d6d6d6" stroke-width="1.6"/></svg><div class="a" style="left:2301px;top:160px;width:134px;height:177px;border:2px solid #ee4444;background:#fff;overflow:hidden"><svg style="left:0;top:0" width="130" height="173" viewBox="0 0 760 1013" preserveAspectRatio="none"><use href="#photoG"/></svg></div><div class="a" style="left:2183px;top:345px;width:375px;height:2px;background:#4a4a4a;"></div><div class="a" style="left:2183px;top:347px;width:86px;height:34px;background:#424242;"></div><div class="t" style="left:2188px;top:356px;font-size:17px;color:#eaeaea;;transform:scaleX(0.9710)">96.63%</div><svg style="left:2280px;top:360px" width="16" height="9" viewBox="0 0 16 9"><path d="M0 8l5-6 3 3 3-3 5 6z" fill="#d8d8d8"/></svg><div class="a" style="left:2315px;top:358px;width:165px;height:5px;background:#6e6e6e;"></div><svg style="left:2389px;top:361px" width="16" height="17" viewBox="0 0 16 17"><path d="M8 0l7 8v6q0 3-3 3H4q-3 0-3-3V8z" fill="#e8e8e8" stroke="#3a3a3a" stroke-width="1"/></svg><svg style="left:2496px;top:356px" width="26" height="13" viewBox="0 0 26 13"><path d="M0 12l8-9 4 4 5-6 9 11z" fill="#d8d8d8"/></svg><div class="a" style="left:2183px;top:381px;width:375px;height:4px;background:#333333;"></div><div class="a" style="left:2183px;top:385px;width:375px;height:42px;background:#424242;"></div><div class="a" style="left:2184px;top:385px;width:58px;height:42px;background:#535353;"></div><div class="t" style="left:2198px;top:394px;font-size:19px;color:#e8e8e8;;transform:scaleX(0.8158)">색상</div><svg style="left:2535px;top:401px" width="15" height="12" viewBox="0 0 15 12"><path d="M0 1.5h15M0 4.5h15M0 7.5h15M0 10.5h15" stroke="#d6d6d6" stroke-width="1.6"/></svg><div class="a" style="left:2213px;top:459px;width:29px;height:29px;background:#fff;border:1px solid #2e2e2e;border-radius:2px"></div><div class="a" style="left:2196px;top:442px;width:32px;height:32px;background:#000;border:3px solid #fff;box-shadow:0 0 0 1px #2e2e2e"></div><div class="a" style="left:2250px;top:438px;width:230px;height:115px;background:linear-gradient(to bottom,rgba(0,0,0,0),#000),linear-gradient(to right,#fff,#ff0000)"></div><svg style="left:2250px;top:544px" width="10" height="9" viewBox="0 0 10 9"><path d="M0 1q8 0 9 8" fill="none" stroke="#fff" stroke-width="1.2"/></svg><div class="a" style="left:2505px;top:438px;width:29px;height:115px;background:linear-gradient(to bottom,#ff0000 0%,#ff00ff 16.6%,#0000ff 33.3%,#00ffff 50%,#00ff00 66.6%,#ffff00 83.3%,#ff0000 100%)"></div><svg style="left:2491px;top:546px" width="11" height="11" viewBox="0 0 11 11"><path d="M2 1h3l5 4.5L5 10H2q-1 0-1-1V2q0-1 1-1z" fill="#e8e8e8" stroke="#3a3a3a" stroke-width=".8"/></svg><div class="a" style="left:2183px;top:583px;width:375px;height:4px;background:#333333;"></div><div class="a" style="left:2183px;top:587px;width:375px;height:42px;background:#424242;"></div><div class="a" style="left:2184px;top:587px;width:96px;height:42px;background:#535353;"></div><div class="t" style="left:2198px;top:596px;font-size:19px;color:#e8e8e8;;transform:scaleX(0.8489)">작업 내역</div><svg style="left:2535px;top:602px" width="15" height="12" viewBox="0 0 15 12"><path d="M0 1.5h15M0 4.5h15M0 7.5h15M0 10.5h15" stroke="#d6d6d6" stroke-width="1.6"/></svg><div class="a" style="left:2231px;top:636px;width:21px;height:1px;background:#c8c8c8;"></div><div class="a" style="left:2183px;top:641px;width:351px;height:1px;background:#484848;"></div><div class="a" style="left:2183px;top:642px;width:351px;height:34px;background:#535353;"></div><div class="a" style="left:2183px;top:676px;width:351px;height:1px;background:#454545;"></div><div class="a" style="left:2192px;top:651px;width:18px;height:18px;border:1px solid #474747;border-left-color:#404040"></div><svg style="left:2231px;top:649px" width="24" height="20" viewBox="0 0 24 20"><rect x="1" y="1" width="22" height="18" fill="none" stroke="#d8d8d8" stroke-width="2" stroke-dasharray="4.5 4"/></svg><div class="t" style="left:2271px;top:650px;font-size:19px;color:#e0e0e0;letter-spacing:1px;transform:scaleX(0.8849)">사각형 선택 윤곽</div><div class="a" style="left:2183px;top:677px;width:351px;height:34px;background:#535353;"></div><div class="a" style="left:2183px;top:711px;width:351px;height:1px;background:#454545;"></div><div class="a" style="left:2192px;top:686px;width:18px;height:18px;border:1px solid #474747;border-left-color:#404040"></div><svg style="left:2231px;top:684px" width="24" height="20" viewBox="0 0 24 20"><rect x="1" y="1" width="22" height="18" fill="none" stroke="#d8d8d8" stroke-width="2" stroke-dasharray="4.5 4"/></svg><div class="t" style="left:2271px;top:685px;font-size:19px;color:#e0e0e0;letter-spacing:1px;transform:scaleX(0.8849)">사각형 선택 윤곽</div><div class="a" style="left:2183px;top:711px;width:351px;height:34px;background:#535353;"></div><div class="a" style="left:2183px;top:745px;width:351px;height:1px;background:#454545;"></div><div class="a" style="left:2192px;top:720px;width:18px;height:18px;border:1px solid #474747;border-left-color:#404040"></div><svg style="left:2231px;top:717px" width="22" height="23" viewBox="0 0 22 23"><path d="M1 1h13l7 5v16H1z" fill="#d8d8d8"/><path d="M4 9h14M4 12h14M4 15h14M4 18h14" stroke="#535353" stroke-width="1.2"/></svg><div class="t" style="left:2271px;top:719px;font-size:19px;color:#e0e0e0;letter-spacing:1px;transform:scaleX(0.8675)">선택 영역 이동</div><div class="a" style="left:2183px;top:746px;width:351px;height:34px;background:#6a6a6a;"></div><div class="a" style="left:2183px;top:780px;width:351px;height:1px;background:#454545;"></div><div class="a" style="left:2192px;top:755px;width:18px;height:18px;border:1px solid #474747;border-left-color:#404040"></div><svg style="left:2231px;top:752px" width="22" height="23" viewBox="0 0 22 23"><path d="M1 1h13l7 5v16H1z" fill="#d8d8d8"/><path d="M4 9h14M4 12h14M4 15h14M4 18h14" stroke="#535353" stroke-width="1.2"/></svg><div class="t" style="left:2271px;top:754px;font-size:19px;color:#e0e0e0;letter-spacing:1px;transform:scaleX(0.8693)">선택 해제</div><div class="a" style="left:2534px;top:629px;width:24px;height:152px;background:#4b4b4b;"></div><svg style="left:2540px;top:650px" width="12" height="7" viewBox="0 0 12 7"><path d="M1 6l5-5 5 5" fill="none" stroke="#8a8a8a" stroke-width="1.2"/></svg><div class="a" style="left:2537px;top:742px;width:18px;height:16px;background:#6a6a6a;border-radius:3px"></div><svg style="left:2540px;top:764px" width="12" height="7" viewBox="0 0 12 7"><path d="M1 1l5 5 5-5" fill="none" stroke="#8a8a8a" stroke-width="1.2"/></svg><div class="a" style="left:2183px;top:780px;width:375px;height:2px;background:#3a3a3a;"></div><svg style="left:2404px;top:791px" width="21" height="19" viewBox="0 0 21 19"><path d="M8 3h6l5 4v11H8z" fill="#d8d8d8"/><path d="M1 12h10M6 7v10" stroke="#d8d8d8" stroke-width="2.6"/><path d="M1 12h10" stroke="#d8d8d8" stroke-width="2.6"/></svg><svg style="left:2454px;top:792px" width="20" height="16" viewBox="0 0 20 16"><path d="M1 4h5l2-3h4l2 3h5v11H1z" fill="#d8d8d8"/><circle cx="10" cy="9" r="3.5" fill="#535353"/><circle cx="10" cy="9" r="2" fill="#d8d8d8"/></svg><svg style="left:2500px;top:790px" width="16" height="19" viewBox="0 0 16 19"><path d="M1 3h14M5 3V1h6v2M3 5h10v13H3z" fill="none" stroke="#d8d8d8" stroke-width="1.8"/><path d="M6 7v9M8 7v9M10 7v9" stroke="#d8d8d8" stroke-width="1.2"/></svg><div class="a" style="left:2183px;top:819px;width:375px;height:4px;background:#333333;"></div><div class="a" style="left:2183px;top:823px;width:375px;height:41px;background:#424242;"></div><div class="a" style="left:2184px;top:823px;width:75px;height:41px;background:#535353;"></div><div class="a" style="left:2259px;top:823px;width:58px;height:41px;background:#474747;"></div><div class="t" style="left:2198px;top:832px;font-size:19px;color:#e8e8e8;;transform:scaleX(0.8246)">레이어</div><div class="t" style="left:2272px;top:832px;font-size:19px;color:#b0b0b0;;transform:scaleX(0.8421)">패스</div><svg style="left:2535px;top:838px" width="15" height="12" viewBox="0 0 15 12"><path d="M0 1.5h15M0 4.5h15M0 7.5h15M0 10.5h15" stroke="#d6d6d6" stroke-width="1.6"/></svg><div class="a" style="left:2189px;top:878px;width:126px;height:30px;background:#454545;border:1px solid #3b3b3b;border-radius:4px"></div><svg style="left:2200px;top:885px" width="17" height="17" viewBox="0 0 17 17"><circle cx="7" cy="7" r="5" fill="none" stroke="#e0e0e0" stroke-width="2.2"/><path d="M11 11l4.5 4.5" stroke="#e0e0e0" stroke-width="2.6" stroke-linecap="round"/></svg><div class="t" style="left:2224px;top:884px;font-size:19px;color:#e8e8e8;;transform:scaleX(0.8947)">종류</div><svg style="left:2300px;top:891px" width="11" height="7" viewBox="0 0 11 7"><path d="M1 1l4.5 4.5L10 1" fill="none" stroke="#cfcfcf" stroke-width="1.3"/></svg><svg style="left:2341px;top:884px" width="19" height="17" viewBox="0 0 19 17"><rect x="1" y="1" width="17" height="15" fill="none" stroke="#d8d8d8" stroke-width="1.6"/><path d="M3 14l4-5 3 3 3-4 4 6z" fill="#d8d8d8"/></svg><svg style="left:2377px;top:884px" width="18" height="18" viewBox="0 0 18 18"><circle cx="9" cy="9" r="7.5" fill="none" stroke="#d8d8d8" stroke-width="1.8"/><path d="M14.3 3.7A7.5 7.5 0 0 1 3.7 14.3z" fill="#d8d8d8"/></svg><svg style="left:2414px;top:884px" width="17" height="17" viewBox="0 0 17 17"><path d="M1 1h15v4h-1.5l-1-2H10v12h2v1.5H5V15h2V3H3.5l-1 2H1z" fill="#d8d8d8"/></svg><svg style="left:2449px;top:884px" width="18" height="18" viewBox="0 0 18 18"><rect x="3" y="3" width="12" height="12" fill="none" stroke="#d8d8d8" stroke-width="1.5"/><rect x="1" y="1" width="4" height="4" fill="#d8d8d8"/><rect x="13" y="1" width="4" height="4" fill="#d8d8d8"/><rect x="1" y="13" width="4" height="4" fill="#d8d8d8"/><rect x="13" y="13" width="4" height="4" fill="#d8d8d8"/></svg><svg style="left:2486px;top:883px" width="17" height="19" viewBox="0 0 17 19"><path d="M6 1h6l4 4v9H6z" fill="none" stroke="#d8d8d8" stroke-width="1.5"/><rect x="1" y="8" width="9" height="10" fill="#d8d8d8"/></svg><div class="a" style="left:2530px;top:880px;width:14px;height:26px;border:1px solid #404040;border-radius:7px;background:#4a4a4a"></div><div class="a" style="left:2530px;top:879px;width:14px;height:14px;border-radius:7px;background:#e8e8e8"></div><div class="a" style="left:2183px;top:912px;width:375px;height:1px;background:#3a3a3a;"></div><div class="a" style="left:2189px;top:922px;width:175px;height:30px;background:#454545;border:1px solid #3b3b3b;border-radius:4px"></div><div class="t" style="left:2203px;top:928px;font-size:19px;color:#f0f0f0;;transform:scaleX(0.8947)">표준</div><svg style="left:2350px;top:936px" width="11" height="7" viewBox="0 0 11 7"><path d="M1 1l4.5 4.5L10 1" fill="none" stroke="#cfcfcf" stroke-width="1.3"/></svg><div class="t" style="left:2376px;top:927px;font-size:19px;color:#e0e0e0;;transform:scaleX(0.9227)">불투명도:</div><div class="a" style="left:2461px;top:923px;width:79px;height:26px;background:#454545;border:1px solid #3b3b3b;border-radius:3px"></div><div class="a" style="left:2518px;top:924px;width:1px;height:24px;background:#3b3b3b;"></div><div class="t" style="left:2465px;top:927px;font-size:17px;color:#f2f2f2;;transform:scaleX(0.9659)">100%</div><svg style="left:2524px;top:934px" width="11" height="7" viewBox="0 0 11 7"><path d="M1 1l4.5 4.5L10 1" fill="none" stroke="#cfcfcf" stroke-width="1.3"/></svg><div class="a" style="left:2183px;top:957px;width:375px;height:1px;background:#3a3a3a;"></div><div class="t" style="left:2193px;top:970px;font-size:19px;color:#e0e0e0;;transform:scaleX(0.9794)">잠그기:</div><svg style="left:2268px;top:970px" width="17" height="17" viewBox="0 0 17 17"><rect x="1" y="1" width="15" height="15" fill="none" stroke="#d8d8d8" stroke-width="1.5"/><path d="M1 1h5v5H1zM11 1h5v5h-5zM6 6h5v5H6zM1 11h5v5H1zM11 11h5v5h-5z" fill="#d8d8d8"/></svg><svg style="left:2301px;top:968px" width="20" height="21" viewBox="0 0 20 21"><path d="M19 1L9 13l-2-2z" fill="#d8d8d8"/><path d="M7 12q-4 0-5 4-1 3-2 4 5 1 7-2 2-2 0-6z" fill="#d8d8d8"/></svg><svg style="left:2333px;top:969px" width="20" height="20" viewBox="0 0 20 20"><path d="M10 1l3 3h-2v5h5V7l3 3-3 3v-2h-5v5h2l-3 3-3-3h2v-5H4v2l-3-3 3-3v2h5V4H7z" fill="#d8d8d8"/></svg><svg style="left:2365px;top:969px" width="22" height="20" viewBox="0 0 22 20"><path d="M5 3h8l5 5v9H5z" fill="none" stroke="#d8d8d8" stroke-width="1.6"/><path d="M1 3h3M1 17h3M19 17h3M5 0v2M18 0v2M5 18v2M18 18v2" stroke="#d8d8d8" stroke-width="1.2" stroke-dasharray="1.5 1"/></svg><svg style="left:2401px;top:968px" width="17" height="20" viewBox="0 0 17 20"><path d="M4 8V5q0-4 4.5-4T13 5v3" fill="none" stroke="#d8d8d8" stroke-width="2.2"/><rect x="1" y="8" width="15" height="11" rx="1.5" fill="#d8d8d8"/><circle cx="8.5" cy="13.5" r="1.8" fill="#535353"/></svg><div class="t" style="left:2430px;top:970px;font-size:19px;color:#e0e0e0;;transform:scaleX(0.9060)">칠:</div><div class="a" style="left:2461px;top:966px;width:79px;height:26px;background:#454545;border:1px solid #3b3b3b;border-radius:3px"></div><div class="a" style="left:2518px;top:967px;width:1px;height:24px;background:#3b3b3b;"></div><div class="t" style="left:2465px;top:970px;font-size:17px;color:#f2f2f2;;transform:scaleX(0.9659)">100%</div><svg style="left:2524px;top:977px" width="11" height="7" viewBox="0 0 11 7"><path d="M1 1l4.5 4.5L10 1" fill="none" stroke="#cfcfcf" stroke-width="1.3"/></svg><div class="a" style="left:2183px;top:1001px;width:375px;height:1px;background:#3a3a3a;"></div><div class="a" style="left:2183px;top:1002px;width:351px;height:62px;background:#535353;"></div><div class="a" style="left:2183px;top:1063px;width:351px;height:1px;background:#424242;"></div><div class="a" style="left:2227px;top:1002px;width:1px;height:62px;background:#474747;"></div><svg style="left:2197px;top:1029px" width="20" height="12" viewBox="0 0 20 12"><path d="M1 6q9-10 18 0-9 10-18 0z" fill="#e0e0e0"/><circle cx="10" cy="6" r="3.3" fill="#535353"/><circle cx="10" cy="6" r="2" fill="#e0e0e0"/><circle cx="11" cy="5" r=".8" fill="#535353"/></svg><svg style="left:2246px;top:1023px" width="24" height="21" viewBox="0 0 24 21"><rect x="1" y="1" width="22" height="19" fill="#9a9a9a" stroke="#d8d8d8" stroke-width="1.5"/><path d="M1 1l11 9.5L23 1M1 20l11-9.5L23 20" fill="none" stroke="#d8d8d8" stroke-width="1.5"/><path d="M1 1l11 9.5L23 1z" fill="#e6e6e6"/></svg><svg style="left:2287px;top:1023px" width="13" height="22" viewBox="0 0 13 22"><rect x="2" y="1" width="9" height="10" rx="4.5" fill="none" stroke="#d8d8d8" stroke-width="2"/><rect x="2" y="11" width="9" height="10" rx="4.5" fill="none" stroke="#d8d8d8" stroke-width="2"/><path d="M6.5 7v8" stroke="#d8d8d8" stroke-width="2"/></svg><div class="a" style="left:2304px;top:1012px;width:37px;height:48px;background:#535353;border:1px solid #222"><div class="a" style="left:5px;top:6px;width:26px;height:34px;background:#fff"></div></div><div class="t" style="left:2358px;top:1025px;font-size:19px;color:#e6e6e6;;transform:scaleX(0.9678)">선택 색상 1</div><div class="a" style="left:2183px;top:1064px;width:351px;height:61px;background:#535353;"></div><div class="a" style="left:2183px;top:1124px;width:351px;height:1px;background:#424242;"></div><div class="a" style="left:2227px;top:1064px;width:1px;height:61px;background:#474747;"></div><svg style="left:2197px;top:1091px" width="20" height="12" viewBox="0 0 20 12"><path d="M1 6q9-10 18 0-9 10-18 0z" fill="#e0e0e0"/><circle cx="10" cy="6" r="3.3" fill="#535353"/><circle cx="10" cy="6" r="2" fill="#e0e0e0"/><circle cx="11" cy="5" r=".8" fill="#535353"/></svg><div class="a" style="left:2246px;top:1086px;width:24px;height:20px;border:1.5px solid #d8d8d8;background:linear-gradient(90deg,#111,#eee)"></div><div class="a" style="left:2247px;top:1087px;width:21px;height:8px;background:repeating-linear-gradient(90deg,#d8d8d8 0 2px,#444 2px 4px)"></div><svg style="left:2287px;top:1085px" width="13" height="22" viewBox="0 0 13 22"><rect x="2" y="1" width="9" height="10" rx="4.5" fill="none" stroke="#d8d8d8" stroke-width="2"/><rect x="2" y="11" width="9" height="10" rx="4.5" fill="none" stroke="#d8d8d8" stroke-width="2"/><path d="M6.5 7v8" stroke="#d8d8d8" stroke-width="2"/></svg><div class="a" style="left:2304px;top:1074px;width:37px;height:48px;background:#535353;border:1px solid #222"><div class="a" style="left:5px;top:6px;width:26px;height:34px;background:#fff"></div></div><div class="t" style="left:2358px;top:1087px;font-size:19px;color:#e6e6e6;;transform:scaleX(0.9678)">색조/채도 1</div><div class="a" style="left:2183px;top:1125px;width:351px;height:62px;background:#535353;"></div><div class="a" style="left:2227px;top:1125px;width:307px;height:62px;background:#6a6a6a;"></div><div class="a" style="left:2183px;top:1186px;width:351px;height:1px;background:#424242;"></div><div class="a" style="left:2227px;top:1125px;width:1px;height:62px;background:#474747;"></div><svg style="left:2197px;top:1152px" width="20" height="12" viewBox="0 0 20 12"><path d="M1 6q9-10 18 0-9 10-18 0z" fill="#e0e0e0"/><circle cx="10" cy="6" r="3.3" fill="#535353"/><circle cx="10" cy="6" r="2" fill="#e0e0e0"/><circle cx="11" cy="5" r=".8" fill="#535353"/></svg><div class="a" style="left:2234px;top:1134px;width:37px;height:48px;background:#5a5a5a;border:1px solid #2a2a2a"><div class="a" style="left:5px;top:5px;width:26px;height:35px;background-color:#fff;background-image:linear-gradient(45deg,#cfcfcf 25%,transparent 25%,transparent 75%,#cfcfcf 75%),linear-gradient(45deg,#cfcfcf 25%,transparent 25%,transparent 75%,#cfcfcf 75%);background-size:8px 8px;background-position:0 0,4px 4px;overflow:hidden"><svg style="left:0;top:0" width="26" height="35" viewBox="0 0 26 35"><path d="M0 30l8-4 1 9H0zM26 30l-8-4-1 9h9z" fill="#222"/><path d="M9 28h8v7H9z" fill="#eee"/></svg></div></div><div class="t" style="left:2287px;top:1148px;font-size:19px;color:#e6e6e6;;transform:scaleX(1.0526)">옷</div><div class="a" style="left:2183px;top:1187px;width:351px;height:61px;background:#535353;"></div><div class="a" style="left:2227px;top:1187px;width:307px;height:61px;background:#6a6a6a;"></div><div class="a" style="left:2183px;top:1247px;width:351px;height:1px;background:#424242;"></div><div class="a" style="left:2227px;top:1187px;width:1px;height:61px;background:#474747;"></div><svg style="left:2197px;top:1214px" width="20" height="12" viewBox="0 0 20 12"><path d="M1 6q9-10 18 0-9 10-18 0z" fill="#e0e0e0"/><circle cx="10" cy="6" r="3.3" fill="#535353"/><circle cx="10" cy="6" r="2" fill="#e0e0e0"/><circle cx="11" cy="5" r=".8" fill="#535353"/></svg><div class="a" style="left:2234px;top:1196px;width:37px;height:48px;background:#5a5a5a;border:1px solid #2a2a2a"><div class="a" style="left:5px;top:5px;width:26px;height:35px;background-color:#fff;background-image:linear-gradient(45deg,#cfcfcf 25%,transparent 25%,transparent 75%,#cfcfcf 75%),linear-gradient(45deg,#cfcfcf 25%,transparent 25%,transparent 75%,#cfcfcf 75%);background-size:8px 8px;background-position:0 0,4px 4px;overflow:hidden"><svg style="left:0;top:0" width="26" height="35" viewBox="0 0 26 35"><path d="M5 29q3 2 8 1 5 1 8-2" fill="none" stroke="#333" stroke-width="2"/><path d="M19 27l4 2-3 2z" fill="#222"/></svg></div></div><div class="t" style="left:2287px;top:1210px;font-size:19px;color:#e6e6e6;;transform:scaleX(0.9313)">옷 안에 그림자</div><div class="a" style="left:2183px;top:1248px;width:351px;height:62px;background:#535353;"></div><div class="a" style="left:2227px;top:1248px;width:307px;height:62px;background:#6a6a6a;"></div><div class="a" style="left:2183px;top:1309px;width:351px;height:1px;background:#424242;"></div><div class="a" style="left:2227px;top:1248px;width:1px;height:62px;background:#474747;"></div><svg style="left:2197px;top:1275px" width="20" height="12" viewBox="0 0 20 12"><path d="M1 6q9-10 18 0-9 10-18 0z" fill="#e0e0e0"/><circle cx="10" cy="6" r="3.3" fill="#535353"/><circle cx="10" cy="6" r="2" fill="#e0e0e0"/><circle cx="11" cy="5" r=".8" fill="#535353"/></svg><div class="a" style="left:2234px;top:1257px;width:37px;height:48px;background:#5a5a5a;border:1px solid #2a2a2a"><div class="a" style="left:5px;top:5px;width:26px;height:35px;background-color:#fff;background-image:linear-gradient(45deg,#cfcfcf 25%,transparent 25%,transparent 75%,#cfcfcf 75%),linear-gradient(45deg,#cfcfcf 25%,transparent 25%,transparent 75%,#cfcfcf 75%);background-size:8px 8px;background-position:0 0,4px 4px;overflow:hidden"><svg style="left:0;top:0" width="26" height="35" viewBox="0 0 26 35"><path d="M4 28q9-6 18 0v6H4z" fill="#8a8a8a"/><path d="M6 27q7-3 14 0" fill="none" stroke="#333" stroke-width="1.5"/></svg></div></div><div class="t" style="left:2287px;top:1271px;font-size:19px;color:#e6e6e6;;transform:scaleX(0.8947)">쇄골</div><div class="a" style="left:2183px;top:1310px;width:351px;height:61px;background:#535353;"></div><div class="a" style="left:2227px;top:1310px;width:307px;height:61px;background:#6a6a6a;"></div><div class="a" style="left:2183px;top:1370px;width:351px;height:1px;background:#424242;"></div><div class="a" style="left:2227px;top:1310px;width:1px;height:61px;background:#474747;"></div><svg style="left:2197px;top:1337px" width="20" height="12" viewBox="0 0 20 12"><path d="M1 6q9-10 18 0-9 10-18 0z" fill="#e0e0e0"/><circle cx="10" cy="6" r="3.3" fill="#535353"/><circle cx="10" cy="6" r="2" fill="#e0e0e0"/><circle cx="11" cy="5" r=".8" fill="#535353"/></svg><div class="a" style="left:2234px;top:1319px;width:37px;height:48px;background:#5a5a5a;border:1px solid #2a2a2a"><div class="a" style="left:5px;top:5px;width:26px;height:35px;background-color:#fff;background-image:linear-gradient(45deg,#cfcfcf 25%,transparent 25%,transparent 75%,#cfcfcf 75%),linear-gradient(45deg,#cfcfcf 25%,transparent 25%,transparent 75%,#cfcfcf 75%);background-size:8px 8px;background-position:0 0,4px 4px;overflow:hidden"><svg style="left:0;top:0" width="26" height="35" viewBox="0 0 26 35"><path d="M3 12q2-9 10-8 8-1 10 8l-3 1q-2-5-7-5t-7 5z" fill="#3a2a24"/></svg></div></div><div class="t" style="left:2287px;top:1333px;font-size:19px;color:#e6e6e6;;transform:scaleX(0.9390)">머리색 바꾼거</div><div class="a" style="left:2183px;top:1371px;width:351px;height:62px;background:#535353;"></div><div class="a" style="left:2227px;top:1371px;width:307px;height:62px;background:#6a6a6a;"></div><div class="a" style="left:2183px;top:1432px;width:351px;height:1px;background:#424242;"></div><div class="a" style="left:2227px;top:1371px;width:1px;height:62px;background:#474747;"></div><svg style="left:2197px;top:1398px" width="20" height="12" viewBox="0 0 20 12"><path d="M1 6q9-10 18 0-9 10-18 0z" fill="#e0e0e0"/><circle cx="10" cy="6" r="3.3" fill="#535353"/><circle cx="10" cy="6" r="2" fill="#e0e0e0"/><circle cx="11" cy="5" r=".8" fill="#535353"/></svg><div class="a" style="left:2234px;top:1380px;width:37px;height:48px;background:#5a5a5a;border:1px solid #2a2a2a"><div class="a" style="left:5px;top:5px;width:26px;height:35px;background-color:#fff;background-image:linear-gradient(45deg,#cfcfcf 25%,transparent 25%,transparent 75%,#cfcfcf 75%),linear-gradient(45deg,#cfcfcf 25%,transparent 25%,transparent 75%,#cfcfcf 75%);background-size:8px 8px;background-position:0 0,4px 4px;overflow:hidden"><svg style="left:0;top:0" width="26" height="35" viewBox="0 0 26 35"><path d="M6 1h14q3 5 2 12l-3 8v5h5v9H2v-9h5v-5l-3-8q-1-7 2-12z" fill="#8e8e8e"/></svg></div></div><div class="t" style="left:2287px;top:1394px;font-size:19px;color:#e6e6e6;;transform:scaleX(0.9350)">얼굴 복사</div><div class="a" style="left:2183px;top:1433px;width:351px;height:62px;background:#535353;"></div><div class="a" style="left:2227px;top:1433px;width:307px;height:62px;background:#6a6a6a;"></div><div class="a" style="left:2183px;top:1494px;width:351px;height:1px;background:#424242;"></div><div class="a" style="left:2227px;top:1433px;width:1px;height:62px;background:#474747;"></div><svg style="left:2197px;top:1460px" width="20" height="12" viewBox="0 0 20 12"><path d="M1 6q9-10 18 0-9 10-18 0z" fill="#e0e0e0"/><circle cx="10" cy="6" r="3.3" fill="#535353"/><circle cx="10" cy="6" r="2" fill="#e0e0e0"/><circle cx="11" cy="5" r=".8" fill="#535353"/></svg><div class="a" style="left:2234px;top:1442px;width:37px;height:48px;background:#5a5a5a;border:1px solid #2a2a2a"><div class="a" style="left:5px;top:5px;width:26px;height:35px;background-color:#fff;background-image:linear-gradient(45deg,#cfcfcf 25%,transparent 25%,transparent 75%,#cfcfcf 75%),linear-gradient(45deg,#cfcfcf 25%,transparent 25%,transparent 75%,#cfcfcf 75%);background-size:8px 8px;background-position:0 0,4px 4px;overflow:hidden"><svg style="left:0;top:0" width="26" height="35" viewBox="0 0 760 1013" preserveAspectRatio="none"><use href="#photoG"/></svg></div></div><div class="t" style="left:2287px;top:1456px;font-size:19px;color:#e6e6e6;;transform:scaleX(0.8947)">얼굴</div><div class="a" style="left:2183px;top:1494px;width:351px;height:8px;background:#535353;"></div><div class="a" style="left:2227px;top:1496px;width:307px;height:6px;background:#6a6a6a;"></div><div class="a" style="left:2534px;top:1002px;width:24px;height:500px;background:#4b4b4b;"></div><svg style="left:2540px;top:1016px" width="12" height="7" viewBox="0 0 12 7"><path d="M1 6l5-5 5 5" fill="none" stroke="#8a8a8a" stroke-width="1.2"/></svg><div class="a" style="left:2537px;top:1030px;width:18px;height:400px;background:#6a6a6a;border-radius:3px"></div><svg style="left:2540px;top:1483px" width="12" height="7" viewBox="0 0 12 7"><path d="M1 1l5 5 5-5" fill="none" stroke="#8a8a8a" stroke-width="1.2"/></svg><div class="a" style="left:2183px;top:1500px;width:375px;height:3px;background:#3a3a3a;"></div><svg style="left:2253px;top:1513px" width="21" height="14" viewBox="0 0 21 14"><rect x="1.2" y="1.2" width="10" height="11" rx="5.5" fill="none" stroke="#d8d8d8" stroke-width="2.2"/><rect x="9.8" y="1.2" width="10" height="11" rx="5.5" fill="none" stroke="#d8d8d8" stroke-width="2.2"/><path d="M6 7h9" stroke="#d8d8d8" stroke-width="2.2"/></svg><div class="t" style="left:2297px;top:1510px;font-size:21px;color:#8a8a8a;font-family:Liberation Serif"><i>fx</i></div><svg style="left:2336px;top:1512px" width="19" height="16" viewBox="0 0 19 16"><rect x="0" y="0" width="19" height="16" rx="1" fill="#9a9a9a"/><circle cx="9.5" cy="8" r="4.5" fill="#535353"/></svg><svg style="left:2378px;top:1511px" width="19" height="20" viewBox="0 0 19 20"><circle cx="8.5" cy="8.5" r="7.5" fill="none" stroke="#d8d8d8" stroke-width="1.8"/><path d="M13.8 3.2A7.5 7.5 0 0 1 3.2 13.8z" fill="#d8d8d8"/><path d="M15 17h5l-2.5 3z" fill="#fff"/></svg><svg style="left:2417px;top:1511px" width="19" height="17" viewBox="0 0 19 17"><path d="M1 3h6l2 2h9v11H1z" fill="#d8d8d8"/></svg><svg style="left:2459px;top:1511px" width="17" height="18" viewBox="0 0 17 18"><rect x="1" y="1" width="15" height="16" fill="none" stroke="#d8d8d8" stroke-width="1.6"/><path d="M8.5 4.5v9M4 9h9" stroke="#d8d8d8" stroke-width="2"/></svg><svg style="left:2499px;top:1510px" width="16" height="19" viewBox="0 0 16 19"><path d="M1 3h14M5 3V1h6v2M3 5h10v13H3z" fill="none" stroke="#d8d8d8" stroke-width="1.8"/><path d="M6 7v9M8 7v9M10 7v9" stroke="#d8d8d8" stroke-width="1.2"/></svg><div class="a" style="left:0px;top:1539px;width:2560px;height:3px;background:#e6e6e2;"></div></body></html>
